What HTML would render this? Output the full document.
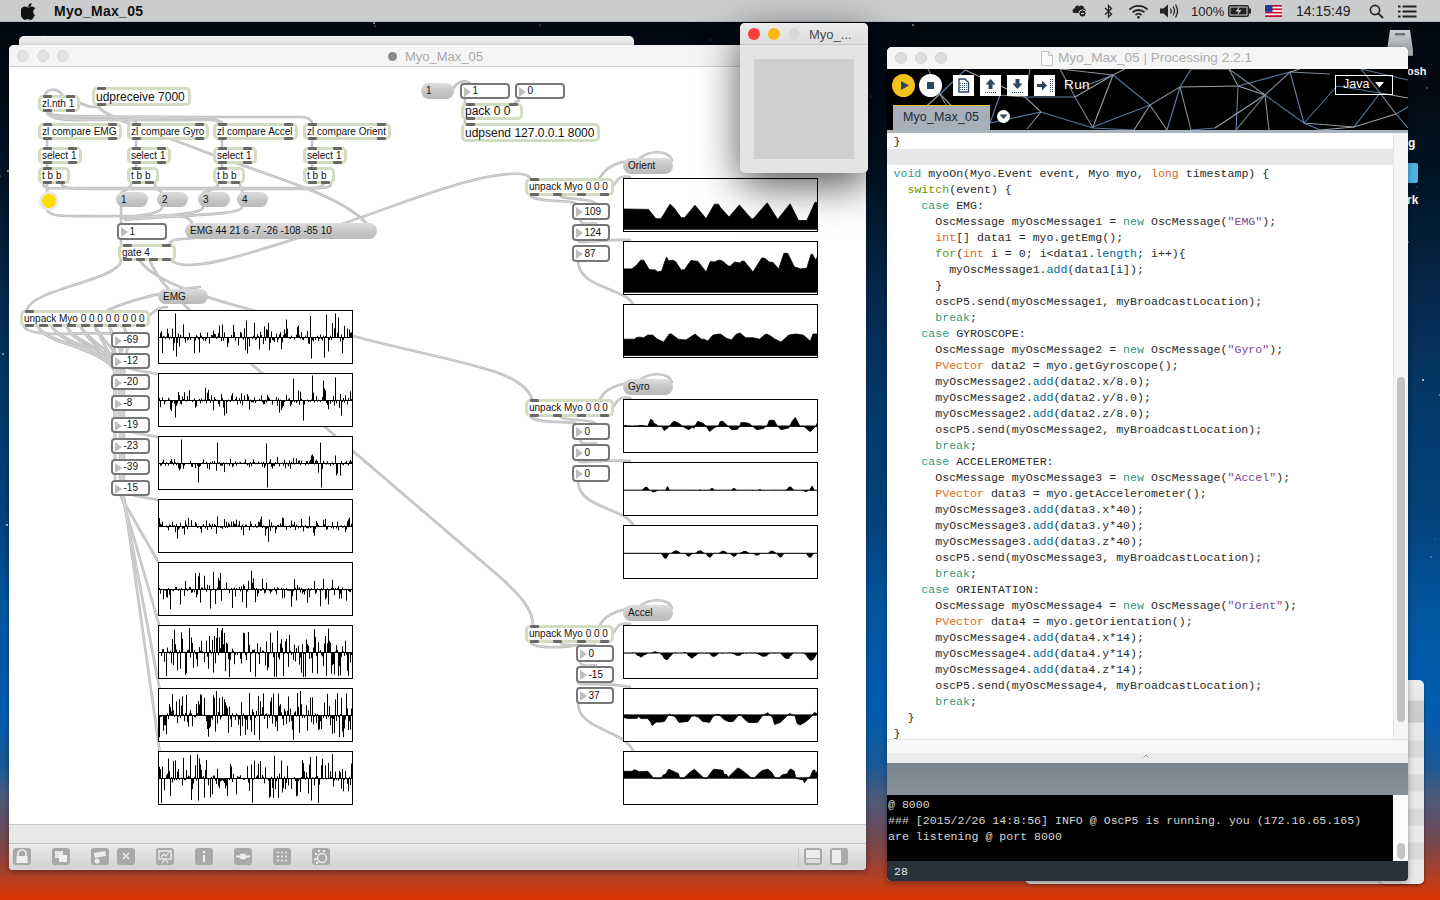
<!DOCTYPE html>
<html><head><meta charset="utf-8"><title>Myo_Max_05</title>
<style>
*{margin:0;padding:0;box-sizing:border-box}
html,body{width:1440px;height:900px;overflow:hidden;font-family:"Liberation Sans",sans-serif}
body{position:relative;background:linear-gradient(to bottom,#02070e 0px,#020a14 90px,#001628 190px,#062a52 310px,#033a6a 410px,#04407a 510px,#02569e 610px,#005cb0 710px,#1a5a98 765px,#505a78 800px,#605068 820px,#74484e 840px,#a04030 868px,#b84020 880px,#dc3400 900px)}
.a{position:absolute}
.menubar{position:absolute;left:0;top:0;width:1440px;height:22px;background:#cbcccd;border-bottom:1px solid #b5b6b8}
.win{position:absolute;border-radius:5px 5px 4px 4px;overflow:hidden}
.ob{position:absolute;background:#fff;border:3px solid #d2dcc2;border-radius:5px;font:10px 'Liberation Sans',sans-serif;color:#111;white-space:nowrap;line-height:11px;padding-left:1px}
.io{position:absolute;width:9px;height:3px;background:#686868;border-radius:1px}
.ms{position:absolute;border-radius:8px;background:linear-gradient(#dcdcdc,#c4c4c4 60%,#b9b9b9);font:10px 'Liberation Sans',sans-serif;color:#111;white-space:nowrap;padding-left:5px}
.nb{position:absolute;background:#fff;border:2px solid #777;border-radius:4px;font:10px 'Liberation Sans',sans-serif;color:#111;white-space:nowrap}
.nb i{position:absolute;left:2px;top:2px;width:0;height:0;border-left:7px solid #bdbdbd;border-top:5.5px solid transparent;border-bottom:5.5px solid transparent}
.gr{position:absolute;background:#fff;border:1px solid #000}
.code{position:absolute;font:11.6px 'Liberation Mono',monospace;color:#2a2a2a;white-space:pre;line-height:16px}
.k1{color:#33997e}.k3{color:#669900}.dt{color:#e2661a}.fn{color:#006699}.st{color:#7d4793}
</style></head><body>

<svg class="a" style="left:0;top:0" width="1440" height="900"><circle cx="663" cy="176" r="0.5" fill="#fff" fill-opacity="0.85"/><circle cx="148" cy="570" r="0.9" fill="#fff" fill-opacity="0.3"/><circle cx="1193" cy="81" r="0.5" fill="#fff" fill-opacity="0.45"/><circle cx="176" cy="466" r="0.5" fill="#fff" fill-opacity="0.85"/><circle cx="492" cy="114" r="0.5" fill="#fff" fill-opacity="0.85"/><circle cx="1158" cy="148" r="0.5" fill="#fff" fill-opacity="0.45"/><circle cx="1181" cy="428" r="0.7" fill="#fff" fill-opacity="0.3"/><circle cx="95" cy="592" r="0.9" fill="#fff" fill-opacity="0.45"/><circle cx="858" cy="169" r="0.9" fill="#fff" fill-opacity="0.3"/><circle cx="1147" cy="207" r="0.7" fill="#fff" fill-opacity="0.3"/><circle cx="762" cy="121" r="0.5" fill="#fff" fill-opacity="0.3"/><circle cx="1267" cy="232" r="1.1" fill="#fff" fill-opacity="0.85"/><circle cx="643" cy="498" r="0.9" fill="#fff" fill-opacity="0.85"/><circle cx="613" cy="276" r="0.7" fill="#fff" fill-opacity="0.45"/><circle cx="167" cy="329" r="0.9" fill="#fff" fill-opacity="0.85"/><circle cx="919" cy="316" r="0.5" fill="#fff" fill-opacity="0.3"/><circle cx="1048" cy="450" r="0.9" fill="#fff" fill-opacity="0.45"/><circle cx="311" cy="522" r="0.5" fill="#fff" fill-opacity="0.85"/><circle cx="1368" cy="101" r="0.9" fill="#fff" fill-opacity="0.6"/><circle cx="1423" cy="380" r="1.1" fill="#fff" fill-opacity="0.85"/><circle cx="140" cy="117" r="1.1" fill="#fff" fill-opacity="0.6"/><circle cx="1427" cy="88" r="0.9" fill="#fff" fill-opacity="0.3"/><circle cx="1325" cy="478" r="1.1" fill="#fff" fill-opacity="0.6"/><circle cx="1369" cy="377" r="1.1" fill="#fff" fill-opacity="0.3"/><circle cx="727" cy="194" r="1.1" fill="#fff" fill-opacity="0.3"/><circle cx="120" cy="245" r="0.7" fill="#fff" fill-opacity="0.6"/><circle cx="507" cy="429" r="1.1" fill="#fff" fill-opacity="0.85"/><circle cx="165" cy="192" r="1.1" fill="#fff" fill-opacity="0.85"/><circle cx="1125" cy="306" r="1.1" fill="#fff" fill-opacity="0.45"/><circle cx="1126" cy="307" r="0.9" fill="#fff" fill-opacity="0.85"/><circle cx="1398" cy="411" r="0.7" fill="#fff" fill-opacity="0.45"/><circle cx="169" cy="202" r="0.7" fill="#fff" fill-opacity="0.45"/><circle cx="1348" cy="260" r="1.1" fill="#fff" fill-opacity="0.3"/><circle cx="1206" cy="208" r="0.9" fill="#fff" fill-opacity="0.6"/><circle cx="8" cy="171" r="0.9" fill="#fff" fill-opacity="0.85"/><circle cx="1248" cy="348" r="0.5" fill="#fff" fill-opacity="0.45"/><circle cx="935" cy="594" r="1.1" fill="#fff" fill-opacity="0.85"/><circle cx="817" cy="425" r="1.1" fill="#fff" fill-opacity="0.3"/><circle cx="1299" cy="432" r="0.7" fill="#fff" fill-opacity="0.3"/><circle cx="137" cy="235" r="0.7" fill="#fff" fill-opacity="0.85"/><circle cx="225" cy="370" r="0.5" fill="#fff" fill-opacity="0.3"/><circle cx="0" cy="176" r="0.9" fill="#fff" fill-opacity="0.3"/><circle cx="1256" cy="48" r="0.7" fill="#fff" fill-opacity="0.3"/><circle cx="1257" cy="407" r="0.9" fill="#fff" fill-opacity="0.45"/><circle cx="711" cy="394" r="0.5" fill="#fff" fill-opacity="0.85"/><circle cx="236" cy="521" r="1.1" fill="#fff" fill-opacity="0.85"/><circle cx="990" cy="341" r="0.7" fill="#fff" fill-opacity="0.3"/><circle cx="209" cy="372" r="1.1" fill="#fff" fill-opacity="0.6"/><circle cx="1417" cy="187" r="0.7" fill="#fff" fill-opacity="0.3"/><circle cx="1081" cy="392" r="0.5" fill="#fff" fill-opacity="0.45"/><circle cx="1081" cy="327" r="0.9" fill="#fff" fill-opacity="0.3"/><circle cx="1061" cy="397" r="0.9" fill="#fff" fill-opacity="0.45"/><circle cx="456" cy="567" r="0.7" fill="#fff" fill-opacity="0.6"/><circle cx="1255" cy="221" r="1.1" fill="#fff" fill-opacity="0.45"/><circle cx="464" cy="226" r="0.9" fill="#fff" fill-opacity="0.85"/><circle cx="59" cy="50" r="1.1" fill="#fff" fill-opacity="0.6"/><circle cx="530" cy="220" r="1.1" fill="#fff" fill-opacity="0.6"/><circle cx="715" cy="395" r="0.7" fill="#fff" fill-opacity="0.3"/><circle cx="209" cy="254" r="0.7" fill="#fff" fill-opacity="0.85"/><circle cx="691" cy="231" r="0.5" fill="#fff" fill-opacity="0.85"/><circle cx="981" cy="374" r="0.5" fill="#fff" fill-opacity="0.3"/><circle cx="795" cy="226" r="0.7" fill="#fff" fill-opacity="0.85"/><circle cx="888" cy="362" r="1.1" fill="#fff" fill-opacity="0.3"/><circle cx="948" cy="433" r="0.7" fill="#fff" fill-opacity="0.3"/><circle cx="348" cy="152" r="0.7" fill="#fff" fill-opacity="0.3"/><circle cx="1209" cy="498" r="1.1" fill="#fff" fill-opacity="0.45"/><circle cx="1346" cy="380" r="0.7" fill="#fff" fill-opacity="0.45"/><circle cx="43" cy="36" r="0.7" fill="#fff" fill-opacity="0.3"/><circle cx="888" cy="221" r="0.5" fill="#fff" fill-opacity="0.45"/><circle cx="515" cy="239" r="0.7" fill="#fff" fill-opacity="0.6"/><circle cx="1201" cy="355" r="1.1" fill="#fff" fill-opacity="0.6"/><circle cx="268" cy="84" r="1.1" fill="#fff" fill-opacity="0.6"/><circle cx="1356" cy="551" r="0.7" fill="#fff" fill-opacity="0.85"/><circle cx="1089" cy="177" r="1.1" fill="#fff" fill-opacity="0.3"/><circle cx="375" cy="26" r="0.7" fill="#fff" fill-opacity="0.45"/><circle cx="289" cy="506" r="0.5" fill="#fff" fill-opacity="0.3"/><circle cx="667" cy="552" r="0.5" fill="#fff" fill-opacity="0.85"/><circle cx="1147" cy="80" r="0.7" fill="#fff" fill-opacity="0.45"/><circle cx="567" cy="65" r="1.1" fill="#fff" fill-opacity="0.3"/><circle cx="1150" cy="50" r="1.1" fill="#fff" fill-opacity="0.3"/><circle cx="666" cy="539" r="0.9" fill="#fff" fill-opacity="0.45"/><circle cx="926" cy="542" r="0.7" fill="#fff" fill-opacity="0.85"/><circle cx="1431" cy="557" r="0.7" fill="#fff" fill-opacity="0.6"/><circle cx="916" cy="162" r="0.5" fill="#fff" fill-opacity="0.85"/><circle cx="803" cy="474" r="0.5" fill="#fff" fill-opacity="0.6"/><circle cx="1374" cy="268" r="0.5" fill="#fff" fill-opacity="0.85"/><circle cx="435" cy="332" r="0.7" fill="#fff" fill-opacity="0.3"/><circle cx="1317" cy="396" r="0.9" fill="#fff" fill-opacity="0.45"/><circle cx="281" cy="500" r="0.5" fill="#fff" fill-opacity="0.45"/><circle cx="815" cy="520" r="0.7" fill="#fff" fill-opacity="0.45"/><circle cx="330" cy="463" r="0.9" fill="#fff" fill-opacity="0.85"/><circle cx="862" cy="222" r="0.9" fill="#fff" fill-opacity="0.6"/><circle cx="188" cy="396" r="0.9" fill="#fff" fill-opacity="0.3"/><circle cx="1134" cy="491" r="0.5" fill="#fff" fill-opacity="0.85"/><circle cx="787" cy="361" r="0.5" fill="#fff" fill-opacity="0.6"/><circle cx="231" cy="256" r="0.5" fill="#fff" fill-opacity="0.3"/><circle cx="543" cy="300" r="0.7" fill="#fff" fill-opacity="0.3"/><circle cx="553" cy="154" r="0.9" fill="#fff" fill-opacity="0.85"/><circle cx="831" cy="174" r="0.9" fill="#fff" fill-opacity="0.85"/><circle cx="183" cy="307" r="0.7" fill="#fff" fill-opacity="0.3"/><circle cx="871" cy="96" r="0.5" fill="#fff" fill-opacity="0.6"/><circle cx="1299" cy="112" r="0.5" fill="#fff" fill-opacity="0.6"/><circle cx="1245" cy="249" r="0.9" fill="#fff" fill-opacity="0.3"/><circle cx="249" cy="486" r="0.9" fill="#fff" fill-opacity="0.3"/><circle cx="1132" cy="449" r="0.7" fill="#fff" fill-opacity="0.6"/><circle cx="88" cy="561" r="0.5" fill="#fff" fill-opacity="0.45"/><circle cx="330" cy="290" r="0.7" fill="#fff" fill-opacity="0.3"/><circle cx="413" cy="341" r="0.7" fill="#fff" fill-opacity="0.6"/><circle cx="593" cy="478" r="0.9" fill="#fff" fill-opacity="0.45"/><circle cx="710" cy="40" r="0.5" fill="#fff" fill-opacity="0.6"/><circle cx="31" cy="40" r="1.1" fill="#fff" fill-opacity="0.45"/><circle cx="503" cy="479" r="1.1" fill="#fff" fill-opacity="0.3"/><circle cx="1344" cy="528" r="0.9" fill="#fff" fill-opacity="0.85"/><circle cx="1408" cy="242" r="0.9" fill="#fff" fill-opacity="0.45"/><circle cx="406" cy="165" r="0.9" fill="#fff" fill-opacity="0.85"/><circle cx="111" cy="154" r="0.5" fill="#fff" fill-opacity="0.3"/><circle cx="1280" cy="283" r="0.7" fill="#fff" fill-opacity="0.85"/><circle cx="113" cy="108" r="0.9" fill="#fff" fill-opacity="0.85"/><circle cx="1226" cy="270" r="0.5" fill="#fff" fill-opacity="0.6"/><circle cx="940" cy="211" r="0.9" fill="#fff" fill-opacity="0.45"/><circle cx="913" cy="25" r="0.9" fill="#fff" fill-opacity="0.6"/><circle cx="673" cy="582" r="0.7" fill="#fff" fill-opacity="0.6"/><circle cx="70" cy="338" r="0.9" fill="#fff" fill-opacity="0.45"/><circle cx="374" cy="23" r="1.1" fill="#fff" fill-opacity="0.6"/><circle cx="171" cy="508" r="0.7" fill="#fff" fill-opacity="0.6"/><circle cx="508" cy="538" r="0.5" fill="#fff" fill-opacity="0.3"/><circle cx="541" cy="113" r="1.1" fill="#fff" fill-opacity="0.45"/><circle cx="1201" cy="64" r="0.5" fill="#fff" fill-opacity="0.85"/><circle cx="613" cy="333" r="0.5" fill="#fff" fill-opacity="0.45"/><circle cx="1199" cy="563" r="1.1" fill="#fff" fill-opacity="0.45"/><circle cx="667" cy="528" r="0.9" fill="#fff" fill-opacity="0.45"/><circle cx="1267" cy="170" r="1.1" fill="#fff" fill-opacity="0.3"/><circle cx="1435" cy="539" r="0.5" fill="#fff" fill-opacity="0.45"/><circle cx="1405" cy="257" r="0.5" fill="#fff" fill-opacity="0.3"/><circle cx="85" cy="158" r="0.5" fill="#fff" fill-opacity="0.6"/><circle cx="771" cy="484" r="0.5" fill="#fff" fill-opacity="0.3"/><circle cx="1282" cy="566" r="1.1" fill="#fff" fill-opacity="0.45"/><circle cx="540" cy="25" r="0.5" fill="#fff" fill-opacity="0.85"/><circle cx="1030" cy="570" r="0.5" fill="#fff" fill-opacity="0.3"/><circle cx="970" cy="280" r="0.9" fill="#fff" fill-opacity="0.3"/><circle cx="480" cy="232" r="1.1" fill="#fff" fill-opacity="0.45"/><circle cx="1011" cy="413" r="1.1" fill="#fff" fill-opacity="0.3"/><circle cx="1400" cy="316" r="0.7" fill="#fff" fill-opacity="0.3"/><circle cx="158" cy="172" r="0.9" fill="#fff" fill-opacity="0.6"/><circle cx="1334" cy="333" r="0.5" fill="#fff" fill-opacity="0.45"/><circle cx="987" cy="84" r="0.9" fill="#fff" fill-opacity="0.85"/><circle cx="1376" cy="123" r="1.1" fill="#fff" fill-opacity="0.45"/><circle cx="595" cy="550" r="1.1" fill="#fff" fill-opacity="0.6"/><circle cx="954" cy="499" r="0.7" fill="#fff" fill-opacity="0.3"/><circle cx="638" cy="109" r="0.5" fill="#fff" fill-opacity="0.85"/><circle cx="593" cy="491" r="1.1" fill="#fff" fill-opacity="0.3"/><circle cx="550" cy="418" r="0.7" fill="#fff" fill-opacity="0.45"/><circle cx="152" cy="114" r="0.9" fill="#fff" fill-opacity="0.45"/><circle cx="736" cy="157" r="0.5" fill="#fff" fill-opacity="0.6"/><circle cx="1440" cy="395" r="1.1" fill="#fff" fill-opacity="0.45"/><circle cx="995" cy="425" r="0.7" fill="#fff" fill-opacity="0.3"/><circle cx="7" cy="525" r="1.1" fill="#fff" fill-opacity="0.85"/><circle cx="618" cy="166" r="0.9" fill="#fff" fill-opacity="0.85"/><circle cx="770" cy="345" r="0.9" fill="#fff" fill-opacity="0.3"/><circle cx="3" cy="354" r="1.1" fill="#fff" fill-opacity="0.6"/></svg>
<div class="menubar">
<svg class="a" style="left:21px;top:3px" width="15" height="17" viewBox="0 0 15 17"><path d="M10.6 0.3c0.1 1-0.3 2-0.9 2.7-0.6 0.7-1.6 1.2-2.5 1.1-0.1-1 0.4-2 0.9-2.6 0.6-0.7 1.7-1.2 2.5-1.2zM13.7 12.3c-0.4 0.9-0.6 1.3-1.1 2.1-0.7 1.1-1.8 2.5-3 2.5-1.1 0-1.4-0.7-2.9-0.7-1.5 0-1.8 0.7-2.9 0.7-1.2 0-2.2-1.2-2.9-2.3C-1 11.6-1.2 7.9 0.1 5.9c0.9-1.4 2.4-2.3 3.8-2.3 1.4 0 2.3 0.8 3.5 0.8 1.1 0 1.8-0.8 3.4-0.8 1.2 0 2.6 0.7 3.5 1.9-3.1 1.7-2.6 6.1 0.4 6.8z" fill="#111"/></svg>
<div class="a" style="left:54px;top:3px;font:bold 14px 'Liberation Sans',sans-serif;color:#111;letter-spacing:.3px">Myo_Max_05</div>
<div class="a" style="left:1191px;top:4px;font:13px 'Liberation Sans',sans-serif;color:#222">100%</div>
<div class="a" style="left:1296px;top:3px;font:14px 'Liberation Sans',sans-serif;color:#222">14:15:49</div>
<svg class="a" style="left:1071px;top:4px" width="17" height="14"><path d="M4 4C4 1.5 7 0.5 8.5 2.5C10 0.5 13.5 1.5 13 4.5C15.5 5 15.5 8.5 13 9H3.5C1 9 0.5 5 4 4Z" fill="#222"/><circle cx="11.5" cy="9.5" r="3.6" fill="#222" stroke="#d0d0d0" stroke-width="1"/><path d="M10 9.5H13" stroke="#d0d0d0" stroke-width="1.2"/></svg>
<svg class="a" style="left:1103px;top:3px" width="11" height="17"><path d="M2 5L8.5 11L5.5 14V2.5L8.5 5.5L2 11.5" fill="none" stroke="#222" stroke-width="1.3"/></svg>
<svg class="a" style="left:1128px;top:4px" width="21" height="15"><path d="M1.5 5.5A13 13 0 0 1 19.5 5.5" fill="none" stroke="#222" stroke-width="1.8"/><path d="M4.5 8.3A9 9 0 0 1 16.5 8.3" fill="none" stroke="#222" stroke-width="1.8"/><path d="M7.5 11A4.5 4.5 0 0 1 13.5 11" fill="none" stroke="#222" stroke-width="1.8"/><circle cx="10.5" cy="13.3" r="1.3" fill="#222"/></svg>
<svg class="a" style="left:1159px;top:3px" width="21" height="16"><path d="M1 5.5H4.5L9 1.5V14.5L4.5 10.5H1Z" fill="#222"/><path d="M11.5 5.5Q13 8 11.5 10.5M14 3.5Q17 8 14 12.5M16.5 1.5Q20.5 8 16.5 14.5" fill="none" stroke="#222" stroke-width="1.3"/></svg>
<svg class="a" style="left:1228px;top:5px" width="24" height="12"><rect x="0.8" y="0.8" width="19.5" height="10.4" rx="1.5" fill="none" stroke="#222" stroke-width="1.5"/><rect x="21" y="3.5" width="2" height="5" fill="#222"/><rect x="2.5" y="2.5" width="16" height="7" fill="#222"/><path d="M11.5 1.5L7.5 6.5H10.5L9 10.5L13.5 5H10.5Z" fill="#d0d0d0"/></svg>
<svg class="a" style="left:1265px;top:5px" width="17" height="12"><rect x="0" y="0" width="17" height="12" fill="#c8102e"/><rect x="0" y="1.7" width="17" height="1.7" fill="#fff"/><rect x="0" y="5.1" width="17" height="1.7" fill="#fff"/><rect x="0" y="8.5" width="17" height="1.7" fill="#fff"/><rect x="0" y="0" width="7.5" height="6.8" fill="#2a3a8c"/></svg>
<svg class="a" style="left:1369px;top:4px" width="15" height="15"><circle cx="6" cy="6" r="4.6" fill="none" stroke="#222" stroke-width="1.6"/><path d="M9.3 9.3L14 14" stroke="#222" stroke-width="1.8"/></svg>
<svg class="a" style="left:1398px;top:5px" width="19" height="13"><g fill="#222"><rect x="0" y="0.5" width="2.5" height="2"/><rect x="0" y="5.5" width="2.5" height="2"/><rect x="0" y="10.5" width="2.5" height="2"/><rect x="4.5" y="0.5" width="14" height="2"/><rect x="4.5" y="5.5" width="14" height="2"/><rect x="4.5" y="10.5" width="14" height="2"/></g></svg>
</div>
<svg class="a" style="left:1386px;top:28px" width="28" height="30"><defs><linearGradient id="hd" x1="0" y1="0" x2="0" y2="1"><stop offset="0" stop-color="#cfd3d6"/><stop offset="1" stop-color="#8f959a"/></linearGradient></defs><path d="M4 2H24L27 22V28H1V22Z" fill="url(#hd)"/><rect x="9" y="5" width="10" height="2.5" fill="#6d7277"/><rect x="2" y="22" width="24" height="5" fill="#aeb3b7"/></svg>
<div class="a" style="left:1407px;top:65px;font:bold 11px 'Liberation Sans',sans-serif;color:#f4f4f4">osh</div>
<div class="a" style="left:1408px;top:136px;font:bold 12px 'Liberation Sans',sans-serif;color:#fff">g</div>
<div class="a" style="left:1407px;top:163px;width:11px;height:20px;background:#4fb4e4;border-radius:2px"></div>
<div class="a" style="left:1407px;top:193px;font:bold 12px 'Liberation Sans',sans-serif;color:#fff">rk</div>
<div class="a" style="left:19px;top:36px;width:615px;height:20px;background:#ebebeb;border-radius:5px 5px 0 0;border-top:1px solid #f6f6f6"></div>
<div class="win" style="left:9px;top:45px;width:857px;height:825px;background:#fff;box-shadow:0 2px 6px rgba(0,0,0,.35)">
<div class="a" style="left:0;top:0;width:857px;height:22px;background:#f5f5f5;border-bottom:1px solid #cfcfcf"></div>
<div class="a" style="left:8px;top:5px;width:12px;height:12px;border-radius:50%;background:#e2e2e2;border:1px solid #d6d6d6"></div>
<div class="a" style="left:28px;top:5px;width:12px;height:12px;border-radius:50%;background:#e2e2e2;border:1px solid #d6d6d6"></div>
<div class="a" style="left:48px;top:5px;width:12px;height:12px;border-radius:50%;background:#e2e2e2;border:1px solid #d6d6d6"></div>
<div class="a" style="left:379px;top:7px;width:9px;height:9px;border-radius:50%;background:#8a8a8a"></div>
<div class="a" style="left:396px;top:4px;font:13px 'Liberation Sans',sans-serif;color:#a9a9a9">Myo_Max_05</div>
<div class="a" style="left:0;top:779px;width:857px;height:19px;background:#e8e8e8;border-top:1px solid #c8c8c8"></div>
<div class="a" style="left:0;top:798px;width:857px;height:27px;background:linear-gradient(#ebebeb,#d3d3d3 88%,#dadadd);border-top:1px solid #c6c6c6"></div>
<div class="a" style="left:4px;top:803px;width:18px;height:17px;border-radius:3px;background:#a9a9a9"></div><div class="a" style="left:43px;top:803px;width:18px;height:17px;border-radius:3px;background:#a9a9a9"></div><div class="a" style="left:82px;top:803px;width:18px;height:17px;border-radius:3px;background:#a9a9a9"></div><div class="a" style="left:108px;top:803px;width:18px;height:17px;border-radius:3px;background:#a9a9a9"></div><div class="a" style="left:147px;top:803px;width:18px;height:17px;border-radius:3px;background:#a9a9a9"></div><div class="a" style="left:186px;top:803px;width:18px;height:17px;border-radius:3px;background:#a9a9a9"></div><div class="a" style="left:225px;top:803px;width:18px;height:17px;border-radius:3px;background:#a9a9a9"></div><div class="a" style="left:264px;top:803px;width:18px;height:17px;border-radius:3px;background:#a9a9a9"></div><div class="a" style="left:303px;top:803px;width:18px;height:17px;border-radius:3px;background:#a9a9a9"></div><svg class="a" style="left:4px;top:803px" width="18" height="17"><path d="M5 8V6A4 4 0 0 1 13 6V8" fill="none" stroke="#eee" stroke-width="1.6"/><rect x="3.5" y="8" width="11" height="7" fill="#eee"/></svg><svg class="a" style="left:43px;top:803px" width="18" height="17"><rect x="3" y="3" width="8" height="7" fill="#e6e6e6"/><rect x="7" y="7" width="8" height="7" fill="#f2f2f2"/></svg><svg class="a" style="left:82px;top:803px" width="18" height="17"><path d="M3 5L14 3L15 8L4 10Z" fill="#eee"/><circle cx="6" cy="13" r="2.5" fill="#eee"/></svg><svg class="a" style="left:108px;top:803px" width="18" height="17"><path d="M6 5L12 11M12 5L6 11" stroke="#eee" stroke-width="1.4"/></svg><svg class="a" style="left:147px;top:803px" width="18" height="17"><rect x="3" y="3" width="12" height="8" fill="none" stroke="#eee" stroke-width="1.4"/><path d="M5 9L8 6L10 8L13 4M9 11L6 15M9 11L12 15" stroke="#eee" stroke-width="1.2" fill="none"/></svg><svg class="a" style="left:186px;top:803px" width="18" height="17"><circle cx="9" cy="4" r="1.3" fill="#eee"/><rect x="8" y="7" width="2" height="7" fill="#eee"/></svg><svg class="a" style="left:225px;top:803px" width="18" height="17"><path d="M2 8.5H16" stroke="#eee" stroke-width="2"/><ellipse cx="9" cy="8.5" rx="3.5" ry="3" fill="#eee"/></svg><svg class="a" style="left:264px;top:803px" width="18" height="17"><circle cx="5" cy="4.5" r="1" fill="#eee"/><circle cx="5" cy="8.5" r="1" fill="#eee"/><circle cx="5" cy="12.5" r="1" fill="#eee"/><circle cx="9" cy="4.5" r="1" fill="#eee"/><circle cx="9" cy="8.5" r="1" fill="#eee"/><circle cx="9" cy="12.5" r="1" fill="#eee"/><circle cx="13" cy="4.5" r="1" fill="#eee"/><circle cx="13" cy="8.5" r="1" fill="#eee"/><circle cx="13" cy="12.5" r="1" fill="#eee"/></svg><svg class="a" style="left:303px;top:803px" width="18" height="17"><circle cx="10" cy="10" r="4.5" fill="none" stroke="#eee" stroke-width="1.5"/><circle cx="4" cy="6" r="1.2" fill="#eee"/><circle cx="7" cy="3" r="1.2" fill="#eee"/><circle cx="12" cy="3" r="1.2" fill="#eee"/><circle cx="3.5" cy="11" r="1.2" fill="#eee"/><circle cx="5" cy="15" r="1.2" fill="#eee"/></svg><div class="a" style="left:789px;top:803px;width:1px;height:20px;background:#c9c9c9"></div><div class="a" style="left:795px;top:803px;width:18px;height:17px;border:2px solid #aaa;border-radius:3px;background:linear-gradient(#ececec 0,#ececec 62%,#aaa 62%,#aaa 72%,#dcdcdc 72%)"></div><div class="a" style="left:821px;top:803px;width:18px;height:17px;border:2px solid #aaa;border-radius:3px;background:linear-gradient(to right,#ececec 0,#ececec 62%,#aaa 62%,#aaa 100%)"></div>
</div>
<svg class="a" style="left:0;top:0" width="870" height="830"><path d="M47 112 C47 118 60 117 90 117 L300 117 C308 117 311 119 312 123" fill="none" stroke="#bcbcbc" stroke-width="2.6" stroke-linecap="round"/><path d="M47 112 C49 121 70 120 100 120 L210 120 C218 120 222 121 222 123" fill="none" stroke="#bcbcbc" stroke-width="2.6" stroke-linecap="round"/><path d="M50 112 C55 121 90 120 120 119 C130 119 136 121 136 123" fill="none" stroke="#bcbcbc" stroke-width="2.6" stroke-linecap="round"/><path d="M56 115 C80 118 190 116 210 118 C216 119 218 121 218 123" fill="none" stroke="#bcbcbc" stroke-width="2.6" stroke-linecap="round"/><path d="M80 103 C90 108 95 108 100 106" fill="none" stroke="#bcbcbc" stroke-width="2.6" stroke-linecap="round"/><path d="M97 106 C110 120 150 130 200 150 C280 180 340 195 366 223" fill="none" stroke="#bcbcbc" stroke-width="2.6" stroke-linecap="round"/><path d="M45 95 C47 88 58 88 62 95" fill="none" stroke="#bcbcbc" stroke-width="2.6" stroke-linecap="round"/><path d="M47 140 L47 147" fill="none" stroke="#bcbcbc" stroke-width="2.6" stroke-linecap="round"/><path d="M136 140 L136 147" fill="none" stroke="#bcbcbc" stroke-width="2.6" stroke-linecap="round"/><path d="M222 140 L222 147" fill="none" stroke="#bcbcbc" stroke-width="2.6" stroke-linecap="round"/><path d="M312 140 L312 147" fill="none" stroke="#bcbcbc" stroke-width="2.6" stroke-linecap="round"/><path d="M47 164 L47 167" fill="none" stroke="#bcbcbc" stroke-width="2.6" stroke-linecap="round"/><path d="M136 164 L136 167" fill="none" stroke="#bcbcbc" stroke-width="2.6" stroke-linecap="round"/><path d="M222 164 L222 167" fill="none" stroke="#bcbcbc" stroke-width="2.6" stroke-linecap="round"/><path d="M312 164 L312 167" fill="none" stroke="#bcbcbc" stroke-width="2.6" stroke-linecap="round"/><path d="M47 184 C47 190 47 192 48 194" fill="none" stroke="#bcbcbc" stroke-width="2.6" stroke-linecap="round"/><path d="M43 184 C44 190 50 188 80 188 L320 188 C330 188 331 186 331 184" fill="none" stroke="#bcbcbc" stroke-width="2.6" stroke-linecap="round"/><path d="M62 184 C62 188 70 189 100 189 L300 189 C318 189 322 187 324 184" fill="none" stroke="#bcbcbc" stroke-width="2.6" stroke-linecap="round"/><path d="M131 184 C131 189 125 190 121 193" fill="none" stroke="#bcbcbc" stroke-width="2.6" stroke-linecap="round"/><path d="M155 184 C155 189 160 190 162 193" fill="none" stroke="#bcbcbc" stroke-width="2.6" stroke-linecap="round"/><path d="M218 184 C218 189 210 190 203 193" fill="none" stroke="#bcbcbc" stroke-width="2.6" stroke-linecap="round"/><path d="M240 184 C240 189 244 190 242 193" fill="none" stroke="#bcbcbc" stroke-width="2.6" stroke-linecap="round"/><path d="M47 209 C47 218 70 216 120 216 L170 216 C185 216 190 218 192 223" fill="none" stroke="#bcbcbc" stroke-width="2.6" stroke-linecap="round"/><path d="M121 207 L121 223" fill="none" stroke="#bcbcbc" stroke-width="2.6" stroke-linecap="round"/><path d="M162 207 C162 214 140 215 122 218" fill="none" stroke="#bcbcbc" stroke-width="2.6" stroke-linecap="round"/><path d="M203 207 C203 215 160 215 125 219" fill="none" stroke="#bcbcbc" stroke-width="2.6" stroke-linecap="round"/><path d="M242 207 C242 216 170 215 126 220" fill="none" stroke="#bcbcbc" stroke-width="2.6" stroke-linecap="round"/><path d="M121 240 L121 244" fill="none" stroke="#bcbcbc" stroke-width="2.6" stroke-linecap="round"/><path d="M170 244 C170 238 180 240 195 238" fill="none" stroke="#bcbcbc" stroke-width="2.6" stroke-linecap="round"/><path d="M121 261 C118 280 30 290 27 310" fill="none" stroke="#bcbcbc" stroke-width="2.6" stroke-linecap="round"/><path d="M140 261 C160 290 250 310 353 336 C450 362 522 368 532 399" fill="none" stroke="#bcbcbc" stroke-width="2.6" stroke-linecap="round"/><path d="M150 261 C160 285 180 300 200 320 L500 577 C520 595 533 610 533 625" fill="none" stroke="#bcbcbc" stroke-width="2.6" stroke-linecap="round"/><path d="M172 261 C190 275 260 250 330 228 C400 205 480 170 522 174 C528 175 530 177 530 179" fill="none" stroke="#bcbcbc" stroke-width="2.6" stroke-linecap="round"/><path d="M108 310 C130 300 170 290 200 287" fill="none" stroke="#bcbcbc" stroke-width="2.6" stroke-linecap="round"/><path d="M150 315 C155 310 160 307 167 307" fill="none" stroke="#bcbcbc" stroke-width="2.6" stroke-linecap="round"/><path d="M24.0 327 C34.0 340 100 330 113 334.0" fill="none" stroke="#bcbcbc" stroke-width="2.6" stroke-linecap="round"/><path d="M38.2 327 C46.2 345 114 355 115 353.1 L115 353.1" fill="none" stroke="#bcbcbc" stroke-width="2.6" stroke-linecap="round"/><path d="M52.5 327 C60.5 345 114 355 115 374.3 L115 374.3" fill="none" stroke="#bcbcbc" stroke-width="2.6" stroke-linecap="round"/><path d="M66.8 327 C74.8 345 114 355 115 375.0 L115 395.4" fill="none" stroke="#bcbcbc" stroke-width="2.6" stroke-linecap="round"/><path d="M81.0 327 C89.0 345 114 355 115 375.0 L115 416.6" fill="none" stroke="#bcbcbc" stroke-width="2.6" stroke-linecap="round"/><path d="M95.2 327 C103.2 345 114 355 115 375.0 L115 437.7" fill="none" stroke="#bcbcbc" stroke-width="2.6" stroke-linecap="round"/><path d="M109.5 327 C117.5 345 114 355 115 375.0 L115 458.8" fill="none" stroke="#bcbcbc" stroke-width="2.6" stroke-linecap="round"/><path d="M123.8 327 C131.8 345 114 355 115 375.0 L115 480.0" fill="none" stroke="#bcbcbc" stroke-width="2.6" stroke-linecap="round"/><path d="M38.2 327 C48.2 345 117 350 118 380 L118 361 C121 371 150 371 162 375" fill="none" stroke="#bcbcbc" stroke-width="2.6" stroke-linecap="round"/><path d="M52.5 327 C62.5 345 118 350 119 380 L119 424 C122 434 150 434 162 438" fill="none" stroke="#bcbcbc" stroke-width="2.6" stroke-linecap="round"/><path d="M66.8 327 C76.8 345 119 350 120 380 L120 487 C123 497 150 497 162 501" fill="none" stroke="#bcbcbc" stroke-width="2.6" stroke-linecap="round"/><path d="M81.0 327 C91.0 345 120 350 121 380 L121 497 L160 565" fill="none" stroke="#bcbcbc" stroke-width="2.6" stroke-linecap="round"/><path d="M95.2 327 C105.2 345 121 350 122 380 L122 497 L160 628" fill="none" stroke="#bcbcbc" stroke-width="2.6" stroke-linecap="round"/><path d="M109.5 327 C119.5 345 122 350 123 380 L123 497 L160 691" fill="none" stroke="#bcbcbc" stroke-width="2.6" stroke-linecap="round"/><path d="M123.8 327 C133.8 345 123 350 124 380 L124 497 L160 754" fill="none" stroke="#bcbcbc" stroke-width="2.6" stroke-linecap="round"/><path d="M452 90 C458 80 466 80 470 83" fill="none" stroke="#bcbcbc" stroke-width="2.6" stroke-linecap="round"/><path d="M465 99 L465 103" fill="none" stroke="#bcbcbc" stroke-width="2.6" stroke-linecap="round"/><path d="M519 99 C519 103 515 101 515 103" fill="none" stroke="#bcbcbc" stroke-width="2.6" stroke-linecap="round"/><path d="M465 120 L465 123" fill="none" stroke="#bcbcbc" stroke-width="2.6" stroke-linecap="round"/><path d="M600 178 C605 168 615 163 628 161" fill="none" stroke="#bcbcbc" stroke-width="2.6" stroke-linecap="round"/><path d="M640 158 C650 150 668 150 672 160" fill="none" stroke="#bcbcbc" stroke-width="2.6" stroke-linecap="round"/><path d="M612 188 C618 178 620 175 630 177" fill="none" stroke="#bcbcbc" stroke-width="2.6" stroke-linecap="round"/><path d="M530 195 C535 203 570 200 575 203" fill="none" stroke="#bcbcbc" stroke-width="2.6" stroke-linecap="round"/><path d="M560 195 C560 200 590 198 595 203" fill="none" stroke="#bcbcbc" stroke-width="2.6" stroke-linecap="round"/><path d="M580 219 C580 228 600 221 595 224" fill="none" stroke="#bcbcbc" stroke-width="2.6" stroke-linecap="round"/><path d="M578 240 C578 245 600 239 630 240" fill="none" stroke="#bcbcbc" stroke-width="2.6" stroke-linecap="round"/><path d="M578 261 C578 288 625 288 633 304" fill="none" stroke="#bcbcbc" stroke-width="2.6" stroke-linecap="round"/><path d="M600 399 C605 389 615 385 628 383" fill="none" stroke="#bcbcbc" stroke-width="2.6" stroke-linecap="round"/><path d="M640 380 C650 372 668 372 672 382" fill="none" stroke="#bcbcbc" stroke-width="2.6" stroke-linecap="round"/><path d="M612 409 C618 399 620 396 630 398" fill="none" stroke="#bcbcbc" stroke-width="2.6" stroke-linecap="round"/><path d="M530 416 C535 424 570 421 575 423" fill="none" stroke="#bcbcbc" stroke-width="2.6" stroke-linecap="round"/><path d="M560 416 C560 421 590 419 595 423" fill="none" stroke="#bcbcbc" stroke-width="2.6" stroke-linecap="round"/><path d="M580 439 C580 448 600 441 595 444" fill="none" stroke="#bcbcbc" stroke-width="2.6" stroke-linecap="round"/><path d="M578 460 C578 465 600 459 630 461" fill="none" stroke="#bcbcbc" stroke-width="2.6" stroke-linecap="round"/><path d="M578 481 C578 508 625 508 633 525" fill="none" stroke="#bcbcbc" stroke-width="2.6" stroke-linecap="round"/><path d="M600 625 C605 615 615 611 628 609" fill="none" stroke="#bcbcbc" stroke-width="2.6" stroke-linecap="round"/><path d="M640 606 C650 598 668 598 672 608" fill="none" stroke="#bcbcbc" stroke-width="2.6" stroke-linecap="round"/><path d="M612 635 C618 625 620 622 630 624" fill="none" stroke="#bcbcbc" stroke-width="2.6" stroke-linecap="round"/><path d="M530 642 C535 650 570 647 575 645" fill="none" stroke="#bcbcbc" stroke-width="2.6" stroke-linecap="round"/><path d="M560 642 C560 647 590 645 595 645" fill="none" stroke="#bcbcbc" stroke-width="2.6" stroke-linecap="round"/><path d="M580 661 C580 670 600 663 595 666" fill="none" stroke="#bcbcbc" stroke-width="2.6" stroke-linecap="round"/><path d="M578 682 C578 687 600 681 630 687" fill="none" stroke="#bcbcbc" stroke-width="2.6" stroke-linecap="round"/><path d="M578 703 C578 730 625 730 633 751" fill="none" stroke="#bcbcbc" stroke-width="2.6" stroke-linecap="round"/><path d="M47 112 C47 118 60 117 90 117 L300 117 C308 117 311 119 312 123" fill="none" stroke="#d9d9d9" stroke-width="0.8"/><path d="M47 112 C49 121 70 120 100 120 L210 120 C218 120 222 121 222 123" fill="none" stroke="#d9d9d9" stroke-width="0.8"/><path d="M50 112 C55 121 90 120 120 119 C130 119 136 121 136 123" fill="none" stroke="#d9d9d9" stroke-width="0.8"/><path d="M56 115 C80 118 190 116 210 118 C216 119 218 121 218 123" fill="none" stroke="#d9d9d9" stroke-width="0.8"/><path d="M80 103 C90 108 95 108 100 106" fill="none" stroke="#d9d9d9" stroke-width="0.8"/><path d="M97 106 C110 120 150 130 200 150 C280 180 340 195 366 223" fill="none" stroke="#d9d9d9" stroke-width="0.8"/><path d="M45 95 C47 88 58 88 62 95" fill="none" stroke="#d9d9d9" stroke-width="0.8"/><path d="M47 140 L47 147" fill="none" stroke="#d9d9d9" stroke-width="0.8"/><path d="M136 140 L136 147" fill="none" stroke="#d9d9d9" stroke-width="0.8"/><path d="M222 140 L222 147" fill="none" stroke="#d9d9d9" stroke-width="0.8"/><path d="M312 140 L312 147" fill="none" stroke="#d9d9d9" stroke-width="0.8"/><path d="M47 164 L47 167" fill="none" stroke="#d9d9d9" stroke-width="0.8"/><path d="M136 164 L136 167" fill="none" stroke="#d9d9d9" stroke-width="0.8"/><path d="M222 164 L222 167" fill="none" stroke="#d9d9d9" stroke-width="0.8"/><path d="M312 164 L312 167" fill="none" stroke="#d9d9d9" stroke-width="0.8"/><path d="M47 184 C47 190 47 192 48 194" fill="none" stroke="#d9d9d9" stroke-width="0.8"/><path d="M43 184 C44 190 50 188 80 188 L320 188 C330 188 331 186 331 184" fill="none" stroke="#d9d9d9" stroke-width="0.8"/><path d="M62 184 C62 188 70 189 100 189 L300 189 C318 189 322 187 324 184" fill="none" stroke="#d9d9d9" stroke-width="0.8"/><path d="M131 184 C131 189 125 190 121 193" fill="none" stroke="#d9d9d9" stroke-width="0.8"/><path d="M155 184 C155 189 160 190 162 193" fill="none" stroke="#d9d9d9" stroke-width="0.8"/><path d="M218 184 C218 189 210 190 203 193" fill="none" stroke="#d9d9d9" stroke-width="0.8"/><path d="M240 184 C240 189 244 190 242 193" fill="none" stroke="#d9d9d9" stroke-width="0.8"/><path d="M47 209 C47 218 70 216 120 216 L170 216 C185 216 190 218 192 223" fill="none" stroke="#d9d9d9" stroke-width="0.8"/><path d="M121 207 L121 223" fill="none" stroke="#d9d9d9" stroke-width="0.8"/><path d="M162 207 C162 214 140 215 122 218" fill="none" stroke="#d9d9d9" stroke-width="0.8"/><path d="M203 207 C203 215 160 215 125 219" fill="none" stroke="#d9d9d9" stroke-width="0.8"/><path d="M242 207 C242 216 170 215 126 220" fill="none" stroke="#d9d9d9" stroke-width="0.8"/><path d="M121 240 L121 244" fill="none" stroke="#d9d9d9" stroke-width="0.8"/><path d="M170 244 C170 238 180 240 195 238" fill="none" stroke="#d9d9d9" stroke-width="0.8"/><path d="M121 261 C118 280 30 290 27 310" fill="none" stroke="#d9d9d9" stroke-width="0.8"/><path d="M140 261 C160 290 250 310 353 336 C450 362 522 368 532 399" fill="none" stroke="#d9d9d9" stroke-width="0.8"/><path d="M150 261 C160 285 180 300 200 320 L500 577 C520 595 533 610 533 625" fill="none" stroke="#d9d9d9" stroke-width="0.8"/><path d="M172 261 C190 275 260 250 330 228 C400 205 480 170 522 174 C528 175 530 177 530 179" fill="none" stroke="#d9d9d9" stroke-width="0.8"/><path d="M108 310 C130 300 170 290 200 287" fill="none" stroke="#d9d9d9" stroke-width="0.8"/><path d="M150 315 C155 310 160 307 167 307" fill="none" stroke="#d9d9d9" stroke-width="0.8"/><path d="M24.0 327 C34.0 340 100 330 113 334.0" fill="none" stroke="#d9d9d9" stroke-width="0.8"/><path d="M38.2 327 C46.2 345 114 355 115 353.1 L115 353.1" fill="none" stroke="#d9d9d9" stroke-width="0.8"/><path d="M52.5 327 C60.5 345 114 355 115 374.3 L115 374.3" fill="none" stroke="#d9d9d9" stroke-width="0.8"/><path d="M66.8 327 C74.8 345 114 355 115 375.0 L115 395.4" fill="none" stroke="#d9d9d9" stroke-width="0.8"/><path d="M81.0 327 C89.0 345 114 355 115 375.0 L115 416.6" fill="none" stroke="#d9d9d9" stroke-width="0.8"/><path d="M95.2 327 C103.2 345 114 355 115 375.0 L115 437.7" fill="none" stroke="#d9d9d9" stroke-width="0.8"/><path d="M109.5 327 C117.5 345 114 355 115 375.0 L115 458.8" fill="none" stroke="#d9d9d9" stroke-width="0.8"/><path d="M123.8 327 C131.8 345 114 355 115 375.0 L115 480.0" fill="none" stroke="#d9d9d9" stroke-width="0.8"/><path d="M38.2 327 C48.2 345 117 350 118 380 L118 361 C121 371 150 371 162 375" fill="none" stroke="#d9d9d9" stroke-width="0.8"/><path d="M52.5 327 C62.5 345 118 350 119 380 L119 424 C122 434 150 434 162 438" fill="none" stroke="#d9d9d9" stroke-width="0.8"/><path d="M66.8 327 C76.8 345 119 350 120 380 L120 487 C123 497 150 497 162 501" fill="none" stroke="#d9d9d9" stroke-width="0.8"/><path d="M81.0 327 C91.0 345 120 350 121 380 L121 497 L160 565" fill="none" stroke="#d9d9d9" stroke-width="0.8"/><path d="M95.2 327 C105.2 345 121 350 122 380 L122 497 L160 628" fill="none" stroke="#d9d9d9" stroke-width="0.8"/><path d="M109.5 327 C119.5 345 122 350 123 380 L123 497 L160 691" fill="none" stroke="#d9d9d9" stroke-width="0.8"/><path d="M123.8 327 C133.8 345 123 350 124 380 L124 497 L160 754" fill="none" stroke="#d9d9d9" stroke-width="0.8"/><path d="M452 90 C458 80 466 80 470 83" fill="none" stroke="#d9d9d9" stroke-width="0.8"/><path d="M465 99 L465 103" fill="none" stroke="#d9d9d9" stroke-width="0.8"/><path d="M519 99 C519 103 515 101 515 103" fill="none" stroke="#d9d9d9" stroke-width="0.8"/><path d="M465 120 L465 123" fill="none" stroke="#d9d9d9" stroke-width="0.8"/><path d="M600 178 C605 168 615 163 628 161" fill="none" stroke="#d9d9d9" stroke-width="0.8"/><path d="M640 158 C650 150 668 150 672 160" fill="none" stroke="#d9d9d9" stroke-width="0.8"/><path d="M612 188 C618 178 620 175 630 177" fill="none" stroke="#d9d9d9" stroke-width="0.8"/><path d="M530 195 C535 203 570 200 575 203" fill="none" stroke="#d9d9d9" stroke-width="0.8"/><path d="M560 195 C560 200 590 198 595 203" fill="none" stroke="#d9d9d9" stroke-width="0.8"/><path d="M580 219 C580 228 600 221 595 224" fill="none" stroke="#d9d9d9" stroke-width="0.8"/><path d="M578 240 C578 245 600 239 630 240" fill="none" stroke="#d9d9d9" stroke-width="0.8"/><path d="M578 261 C578 288 625 288 633 304" fill="none" stroke="#d9d9d9" stroke-width="0.8"/><path d="M600 399 C605 389 615 385 628 383" fill="none" stroke="#d9d9d9" stroke-width="0.8"/><path d="M640 380 C650 372 668 372 672 382" fill="none" stroke="#d9d9d9" stroke-width="0.8"/><path d="M612 409 C618 399 620 396 630 398" fill="none" stroke="#d9d9d9" stroke-width="0.8"/><path d="M530 416 C535 424 570 421 575 423" fill="none" stroke="#d9d9d9" stroke-width="0.8"/><path d="M560 416 C560 421 590 419 595 423" fill="none" stroke="#d9d9d9" stroke-width="0.8"/><path d="M580 439 C580 448 600 441 595 444" fill="none" stroke="#d9d9d9" stroke-width="0.8"/><path d="M578 460 C578 465 600 459 630 461" fill="none" stroke="#d9d9d9" stroke-width="0.8"/><path d="M578 481 C578 508 625 508 633 525" fill="none" stroke="#d9d9d9" stroke-width="0.8"/><path d="M600 625 C605 615 615 611 628 609" fill="none" stroke="#d9d9d9" stroke-width="0.8"/><path d="M640 606 C650 598 668 598 672 608" fill="none" stroke="#d9d9d9" stroke-width="0.8"/><path d="M612 635 C618 625 620 622 630 624" fill="none" stroke="#d9d9d9" stroke-width="0.8"/><path d="M530 642 C535 650 570 647 575 645" fill="none" stroke="#d9d9d9" stroke-width="0.8"/><path d="M560 642 C560 647 590 645 595 645" fill="none" stroke="#d9d9d9" stroke-width="0.8"/><path d="M580 661 C580 670 600 663 595 666" fill="none" stroke="#d9d9d9" stroke-width="0.8"/><path d="M578 682 C578 687 600 681 630 687" fill="none" stroke="#d9d9d9" stroke-width="0.8"/><path d="M578 703 C578 730 625 730 633 751" fill="none" stroke="#d9d9d9" stroke-width="0.8"/></svg>
<div class="ob" style="left:38px;top:95px;width:42px;height:17px;font-size:10px;line-height:11px">zl.nth 1</div><div class="io" style="left:43.0px;top:95px"></div><div class="io" style="left:66.0px;top:95px"></div><div class="io" style="left:43.0px;top:109px"></div><div class="io" style="left:66.0px;top:109px"></div>
<div class="ob" style="left:92px;top:87px;width:99px;height:19px;font-size:12px;line-height:14px">udpreceive 7000</div><div class="io" style="left:97.0px;top:87px"></div><div class="io" style="left:97.0px;top:103px"></div>
<div class="ob" style="left:38px;top:123px;width:84px;height:17px;font-size:10px;line-height:11px">zl compare EMG</div><div class="io" style="left:43.0px;top:123px"></div><div class="io" style="left:108.0px;top:123px"></div><div class="io" style="left:43.0px;top:137px"></div><div class="io" style="left:108.0px;top:137px"></div>
<div class="ob" style="left:38px;top:147px;width:44px;height:17px;font-size:10px;line-height:11px">select 1</div><div class="io" style="left:43.0px;top:147px"></div><div class="io" style="left:68.0px;top:147px"></div><div class="io" style="left:43.0px;top:161px"></div><div class="io" style="left:68.0px;top:161px"></div>
<div class="ob" style="left:38px;top:167px;width:32px;height:17px;font-size:10px;line-height:11px">t b b</div><div class="io" style="left:43.0px;top:167px"></div><div class="io" style="left:43.0px;top:181px"></div><div class="io" style="left:56.0px;top:181px"></div>
<div class="ob" style="left:127px;top:123px;width:82px;height:17px;font-size:10px;line-height:11px">zl compare Gyro</div><div class="io" style="left:132.0px;top:123px"></div><div class="io" style="left:195.0px;top:123px"></div><div class="io" style="left:132.0px;top:137px"></div><div class="io" style="left:195.0px;top:137px"></div>
<div class="ob" style="left:127px;top:147px;width:44px;height:17px;font-size:10px;line-height:11px">select 1</div><div class="io" style="left:132.0px;top:147px"></div><div class="io" style="left:157.0px;top:147px"></div><div class="io" style="left:132.0px;top:161px"></div><div class="io" style="left:157.0px;top:161px"></div>
<div class="ob" style="left:127px;top:167px;width:32px;height:17px;font-size:10px;line-height:11px">t b b</div><div class="io" style="left:132.0px;top:167px"></div><div class="io" style="left:132.0px;top:181px"></div><div class="io" style="left:145.0px;top:181px"></div>
<div class="ob" style="left:213px;top:123px;width:85px;height:17px;font-size:10px;line-height:11px">zl compare Accel</div><div class="io" style="left:218.0px;top:123px"></div><div class="io" style="left:284.0px;top:123px"></div><div class="io" style="left:218.0px;top:137px"></div><div class="io" style="left:284.0px;top:137px"></div>
<div class="ob" style="left:213px;top:147px;width:44px;height:17px;font-size:10px;line-height:11px">select 1</div><div class="io" style="left:218.0px;top:147px"></div><div class="io" style="left:243.0px;top:147px"></div><div class="io" style="left:218.0px;top:161px"></div><div class="io" style="left:243.0px;top:161px"></div>
<div class="ob" style="left:213px;top:167px;width:32px;height:17px;font-size:10px;line-height:11px">t b b</div><div class="io" style="left:218.0px;top:167px"></div><div class="io" style="left:218.0px;top:181px"></div><div class="io" style="left:231.0px;top:181px"></div>
<div class="ob" style="left:303px;top:123px;width:88px;height:17px;font-size:10px;line-height:11px">zl compare Orient</div><div class="io" style="left:308.0px;top:123px"></div><div class="io" style="left:377.0px;top:123px"></div><div class="io" style="left:308.0px;top:137px"></div><div class="io" style="left:377.0px;top:137px"></div>
<div class="ob" style="left:303px;top:147px;width:44px;height:17px;font-size:10px;line-height:11px">select 1</div><div class="io" style="left:308.0px;top:147px"></div><div class="io" style="left:333.0px;top:147px"></div><div class="io" style="left:308.0px;top:161px"></div><div class="io" style="left:333.0px;top:161px"></div>
<div class="ob" style="left:303px;top:167px;width:32px;height:17px;font-size:10px;line-height:11px">t b b</div><div class="io" style="left:308.0px;top:167px"></div><div class="io" style="left:308.0px;top:181px"></div><div class="io" style="left:321.0px;top:181px"></div>
<div class="a" style="left:39px;top:191px;width:20px;height:20px;border-radius:50%;background:#e9e9e9"></div>
<div class="a" style="left:42px;top:194px;width:14px;height:14px;border-radius:50%;background:#ffdd00"></div>
<div class="ms" style="left:116px;top:192px;width:32px;height:15px;font-size:10px;line-height:15px">1</div>
<div class="ms" style="left:157px;top:192px;width:31px;height:15px;font-size:10px;line-height:15px">2</div>
<div class="ms" style="left:198px;top:192px;width:32px;height:15px;font-size:10px;line-height:15px">3</div>
<div class="ms" style="left:237px;top:192px;width:31px;height:15px;font-size:10px;line-height:15px">4</div>
<div class="nb" style="left:117px;top:223px;width:50px;height:17px;font-size:10px;line-height:13px"><i></i><span style="position:absolute;left:10.5px;top:0">1</span></div>
<div class="ms" style="left:185px;top:223px;width:192px;height:16px;font-size:10px;line-height:16px">EMG 44 21 6 -7 -26 -108 -85 10</div>
<div class="ob" style="left:118px;top:244px;width:58px;height:17px;font-size:10px;line-height:11px">gate 4</div><div class="io" style="left:123.0px;top:244px"></div><div class="io" style="left:162.0px;top:244px"></div><div class="io" style="left:123.0px;top:258px"></div><div class="io" style="left:136.0px;top:258px"></div><div class="io" style="left:149.0px;top:258px"></div><div class="io" style="left:162.0px;top:258px"></div>
<div class="ms" style="left:158px;top:289px;width:50px;height:15px;font-size:10px;line-height:15px">EMG</div>
<div class="ob" style="left:20px;top:310px;width:130px;height:17px;font-size:10px;line-height:11px">unpack Myo 0 0 0 0 0 0 0 0</div><div class="io" style="left:25.0px;top:310px"></div><div class="io" style="left:25.0px;top:324px"></div><div class="io" style="left:38.9px;top:324px"></div><div class="io" style="left:52.8px;top:324px"></div><div class="io" style="left:66.6px;top:324px"></div><div class="io" style="left:80.5px;top:324px"></div><div class="io" style="left:94.4px;top:324px"></div><div class="io" style="left:108.2px;top:324px"></div><div class="io" style="left:122.1px;top:324px"></div><div class="io" style="left:136.0px;top:324px"></div>
<div class="nb" style="left:111px;top:332px;width:39px;height:16px;font-size:10px;line-height:12px"><i></i><span style="position:absolute;left:10.5px;top:0">-69</span></div>
<div class="nb" style="left:111px;top:353px;width:39px;height:16px;font-size:10px;line-height:12px"><i></i><span style="position:absolute;left:10.5px;top:0">-12</span></div>
<div class="nb" style="left:111px;top:374px;width:39px;height:16px;font-size:10px;line-height:12px"><i></i><span style="position:absolute;left:10.5px;top:0">-20</span></div>
<div class="nb" style="left:111px;top:395px;width:39px;height:16px;font-size:10px;line-height:12px"><i></i><span style="position:absolute;left:10.5px;top:0">-8</span></div>
<div class="nb" style="left:111px;top:417px;width:39px;height:16px;font-size:10px;line-height:12px"><i></i><span style="position:absolute;left:10.5px;top:0">-19</span></div>
<div class="nb" style="left:111px;top:438px;width:39px;height:16px;font-size:10px;line-height:12px"><i></i><span style="position:absolute;left:10.5px;top:0">-23</span></div>
<div class="nb" style="left:111px;top:459px;width:39px;height:16px;font-size:10px;line-height:12px"><i></i><span style="position:absolute;left:10.5px;top:0">-39</span></div>
<div class="nb" style="left:111px;top:480px;width:39px;height:16px;font-size:10px;line-height:12px"><i></i><span style="position:absolute;left:10.5px;top:0">-15</span></div>
<div class="ms" style="left:421px;top:83px;width:33px;height:16px;font-size:10px;line-height:16px">1</div>
<div class="nb" style="left:460px;top:83px;width:50px;height:16px;font-size:10px;line-height:12px"><i></i><span style="position:absolute;left:10.5px;top:0">1</span></div>
<div class="nb" style="left:515px;top:83px;width:50px;height:16px;font-size:10px;line-height:12px"><i></i><span style="position:absolute;left:10.5px;top:0">0</span></div>
<div class="ob" style="left:461px;top:103px;width:62px;height:17px;font-size:12px;line-height:11px">pack 0 0</div><div class="io" style="left:466.0px;top:103px"></div><div class="io" style="left:509.0px;top:103px"></div><div class="io" style="left:466.0px;top:117px"></div>
<div class="ob" style="left:461px;top:123px;width:139px;height:19px;font-size:12px;line-height:14px">udpsend 127.0.0.1 8000</div><div class="io" style="left:466.0px;top:123px"></div>
<div class="ms" style="left:623px;top:158px;width:50px;height:16px;font-size:10px;line-height:16px">Orient</div>
<div class="ob" style="left:525px;top:178px;width:89px;height:18px;font-size:10px;line-height:12px">unpack Myo 0 0 0</div><div class="io" style="left:530.0px;top:178px"></div><div class="io" style="left:530.0px;top:193px"></div><div class="io" style="left:553.3px;top:193px"></div><div class="io" style="left:576.7px;top:193px"></div><div class="io" style="left:600.0px;top:193px"></div>
<div class="nb" style="left:572px;top:203px;width:38px;height:17px;font-size:10px;line-height:13px"><i></i><span style="position:absolute;left:10.5px;top:0">109</span></div>
<div class="nb" style="left:572px;top:224px;width:38px;height:17px;font-size:10px;line-height:13px"><i></i><span style="position:absolute;left:10.5px;top:0">124</span></div>
<div class="nb" style="left:572px;top:245px;width:38px;height:17px;font-size:10px;line-height:13px"><i></i><span style="position:absolute;left:10.5px;top:0">87</span></div>
<div class="ms" style="left:623px;top:379px;width:50px;height:16px;font-size:10px;line-height:16px">Gyro</div>
<div class="ob" style="left:525px;top:399px;width:89px;height:18px;font-size:10px;line-height:12px">unpack Myo 0 0 0</div><div class="io" style="left:530.0px;top:399px"></div><div class="io" style="left:530.0px;top:414px"></div><div class="io" style="left:553.3px;top:414px"></div><div class="io" style="left:576.7px;top:414px"></div><div class="io" style="left:600.0px;top:414px"></div>
<div class="nb" style="left:572px;top:423px;width:38px;height:17px;font-size:10px;line-height:13px"><i></i><span style="position:absolute;left:10.5px;top:0">0</span></div>
<div class="nb" style="left:572px;top:444px;width:38px;height:17px;font-size:10px;line-height:13px"><i></i><span style="position:absolute;left:10.5px;top:0">0</span></div>
<div class="nb" style="left:572px;top:465px;width:38px;height:17px;font-size:10px;line-height:13px"><i></i><span style="position:absolute;left:10.5px;top:0">0</span></div>
<div class="ms" style="left:623px;top:605px;width:50px;height:16px;font-size:10px;line-height:16px">Accel</div>
<div class="ob" style="left:525px;top:625px;width:89px;height:18px;font-size:10px;line-height:12px">unpack Myo 0 0 0</div><div class="io" style="left:530.0px;top:625px"></div><div class="io" style="left:530.0px;top:640px"></div><div class="io" style="left:553.3px;top:640px"></div><div class="io" style="left:576.7px;top:640px"></div><div class="io" style="left:600.0px;top:640px"></div>
<div class="nb" style="left:576px;top:645px;width:38px;height:17px;font-size:10px;line-height:13px"><i></i><span style="position:absolute;left:10.5px;top:0">0</span></div>
<div class="nb" style="left:576px;top:666px;width:38px;height:17px;font-size:10px;line-height:13px"><i></i><span style="position:absolute;left:10.5px;top:0">-15</span></div>
<div class="nb" style="left:576px;top:687px;width:38px;height:17px;font-size:10px;line-height:13px"><i></i><span style="position:absolute;left:10.5px;top:0">37</span></div>
<div class="gr" style="left:158px;top:310px;width:195px;height:54px"></div>
<svg class="a" style="left:159px;top:311px" width="193" height="52"><path d="M1.5 26.5V21.9M2.5 26.5V20.4M3.5 26.5V42.0M4.5 26.5V24.9M5.5 26.5V25.6M6.5 26.5V28.1M7.5 26.5V25.6M8.5 26.5V17.7M9.5 26.5V22.5M10.5 26.5V28.4M11.5 26.5V25.7M12.5 26.5V27.5M13.5 26.5V17.7M14.5 26.5V39.6M15.5 26.5V32.2M16.5 26.5V2.5M17.5 26.5V45.5M18.5 26.5V31.9M19.5 26.5V22.5M20.5 26.5V35.6M21.5 26.5V23.8M22.5 26.5V27.1M23.5 26.5V25.8M24.5 26.5V13.4M25.5 26.5V27.9M26.5 26.5V31.7M28.5 26.5V29.3M29.5 26.5V28.4M30.5 26.5V21.8M31.5 26.5V29.0M32.5 26.5V25.8M35.5 26.5V42.1M36.5 26.5V29.5M37.5 26.5V24.2M38.5 26.5V25.4M39.5 26.5V28.5M40.5 26.5V41.5M41.5 26.5V21.8M42.5 26.5V24.6M43.5 26.5V27.9M44.5 26.5V29.6M46.5 26.5V30.2M47.5 26.5V28.2M48.5 26.5V21.5M50.5 26.5V32.6M52.5 26.5V23.8M53.5 26.5V24.3M54.5 26.5V19.5M55.5 26.5V22.8M56.5 26.5V23.2M57.5 26.5V27.9M58.5 26.5V25.5M59.5 26.5V21.8M60.5 26.5V14.5M61.5 26.5V25.9M62.5 26.5V30.2M63.5 26.5V13.6M64.5 26.5V29.8M65.5 26.5V21.4M68.5 26.5V35.9M69.5 26.5V32.2M72.5 26.5V24.0M74.5 26.5V13.9M75.5 26.5V21.0M76.5 26.5V29.8M79.5 26.5V34.6M80.5 26.5V27.3M81.5 26.5V21.0M82.5 26.5V21.8M83.5 26.5V27.4M84.5 26.5V28.7M85.5 26.5V17.4M86.5 26.5V39.2M87.5 26.5V9.5M88.5 26.5V42.5M89.5 26.5V27.7M90.5 26.5V35.3M92.5 26.5V25.8M93.5 26.5V28.2M94.5 26.5V24.7M95.5 26.5V11.7M96.5 26.5V29.1M97.5 26.5V28.2M98.5 26.5V23.2M99.5 26.5V25.2M100.5 26.5V38.5M101.5 26.5V20.9M102.5 26.5V23.9M104.5 26.5V33.2M105.5 26.5V15.3M106.5 26.5V29.9M107.5 26.5V18.1M108.5 26.5V19.0M109.5 26.5V11.8M110.5 26.5V39.1M111.5 26.5V31.8M112.5 26.5V20.5M113.5 26.5V29.0M114.5 26.5V29.6M115.5 26.5V30.9M117.5 26.5V22.7M118.5 26.5V31.2M119.5 26.5V28.4M120.5 26.5V23.4M121.5 26.5V21.3M122.5 26.5V38.3M123.5 26.5V31.3M124.5 26.5V24.2M125.5 26.5V18.6M126.5 26.5V22.6M127.5 26.5V8.5M128.5 26.5V17.6M130.5 26.5V27.5M131.5 26.5V27.9M132.5 26.5V24.6M135.5 26.5V28.6M137.5 26.5V23.7M138.5 26.5V16.1M139.5 26.5V14.5M140.5 26.5V24.4M141.5 26.5V27.8M142.5 26.5V21.1M143.5 26.5V28.5M144.5 26.5V29.1M146.5 26.5V24.6M148.5 26.5V20.1M149.5 26.5V32.5M150.5 26.5V33.0M151.5 26.5V5.0M152.5 26.5V47.5M153.5 26.5V29.3M154.5 26.5V30.4M155.5 26.5V27.1M156.5 26.5V29.2M157.5 26.5V27.1M158.5 26.5V24.8M159.5 26.5V30.2M160.5 26.5V27.8M161.5 26.5V23.4M162.5 26.5V28.1M163.5 26.5V29.6M164.5 26.5V24.5M165.5 26.5V46.6M166.5 26.5V25.0M167.5 26.5V3.5M169.5 26.5V40.4M170.5 26.5V28.8M171.5 26.5V24.6M172.5 26.5V28.8M173.5 26.5V12.1M175.5 26.5V17.4M176.5 26.5V2.5M178.5 26.5V21.6M179.5 26.5V6.5M181.5 26.5V30.4M182.5 26.5V23.5M183.5 26.5V42.4M184.5 26.5V29.0M185.5 26.5V14.8M188.5 26.5V17.5M190.5 26.5V18.5M191.5 26.5V21.8M192.5 26.5V21.3" stroke="#000" stroke-width="1" fill="none"/><line x1="0" y1="26.5" x2="193" y2="26.5" stroke="#000" stroke-width="1"/></svg>
<div class="gr" style="left:158px;top:373px;width:195px;height:54px"></div>
<svg class="a" style="left:159px;top:374px" width="193" height="52"><path d="M0.5 26.5V24.2M1.5 26.5V33.2M2.5 26.5V27.1M3.5 26.5V23.4M5.5 26.5V30.3M6.5 26.5V27.5M7.5 26.5V27.1M9.5 26.5V23.7M10.5 26.5V25.3M11.5 26.5V35.6M12.5 26.5V36.9M13.5 26.5V28.7M15.5 26.5V29.5M16.5 26.5V43.5M17.5 26.5V31.9M18.5 26.5V29.6M19.5 26.5V18.0M20.5 26.5V21.1M21.5 26.5V29.7M22.5 26.5V30.6M23.5 26.5V22.4M24.5 26.5V25.0M25.5 26.5V18.3M27.5 26.5V27.6M28.5 26.5V22.0M29.5 26.5V25.8M30.5 26.5V16.2M33.5 26.5V28.1M34.5 26.5V25.8M35.5 26.5V24.4M36.5 26.5V33.7M37.5 26.5V32.3M38.5 26.5V27.1M40.5 26.5V25.0M41.5 26.5V29.5M42.5 26.5V24.4M43.5 26.5V27.5M44.5 26.5V25.8M45.5 26.5V25.6M46.5 26.5V13.7M47.5 26.5V29.4M48.5 26.5V18.7M49.5 26.5V15.8M50.5 26.5V25.1M51.5 26.5V29.0M52.5 26.5V21.4M53.5 26.5V27.3M54.5 26.5V36.3M55.5 26.5V23.1M56.5 26.5V25.1M57.5 26.5V25.9M58.5 26.5V25.8M59.5 26.5V29.9M60.5 26.5V32.5M62.5 26.5V20.0M63.5 26.5V24.2M64.5 26.5V33.5M65.5 26.5V41.5M67.5 26.5V39.5M68.5 26.5V27.8M69.5 26.5V25.6M70.5 26.5V27.4M71.5 26.5V27.8M72.5 26.5V21.5M73.5 26.5V19.4M74.5 26.5V27.4M76.5 26.5V25.0M77.5 26.5V22.8M78.5 26.5V30.4M80.5 26.5V24.2M81.5 26.5V29.5M82.5 26.5V19.3M83.5 26.5V31.4M85.5 26.5V21.5M88.5 26.5V20.0M89.5 26.5V22.4M90.5 26.5V35.7M91.5 26.5V25.6M92.5 26.5V28.4M93.5 26.5V27.9M94.5 26.5V28.5M95.5 26.5V23.4M96.5 26.5V29.0M97.5 26.5V27.2M100.5 26.5V24.9M102.5 26.5V21.3M103.5 26.5V28.4M104.5 26.5V30.2M105.5 26.5V30.0M106.5 26.5V25.7M107.5 26.5V28.6M108.5 26.5V21.0M109.5 26.5V23.1M110.5 26.5V24.4M113.5 26.5V30.6M116.5 26.5V25.8M117.5 26.5V23.2M118.5 26.5V31.7M119.5 26.5V24.2M120.5 26.5V38.5M121.5 26.5V25.6M122.5 26.5V36.1M123.5 26.5V33.7M124.5 26.5V32.2M125.5 26.5V28.0M127.5 26.5V21.1M129.5 26.5V25.1M130.5 26.5V24.0M131.5 26.5V32.4M132.5 26.5V30.5M133.5 26.5V27.7M134.5 26.5V4.5M135.5 26.5V28.2M137.5 26.5V29.1M138.5 26.5V27.5M139.5 26.5V16.5M140.5 26.5V30.7M141.5 26.5V17.6M142.5 26.5V24.9M143.5 26.5V25.9M144.5 26.5V46.5M145.5 26.5V30.5M148.5 26.5V25.6M149.5 26.5V27.9M150.5 26.5V27.2M151.5 26.5V27.7M152.5 26.5V25.5M153.5 26.5V1.5M154.5 26.5V18.7M155.5 26.5V28.5M157.5 26.5V22.0M158.5 26.5V27.6M159.5 26.5V25.7M161.5 26.5V28.2M163.5 26.5V22.9M164.5 26.5V6.5M165.5 26.5V14.5M166.5 26.5V16.5M167.5 26.5V29.0M168.5 26.5V31.2M169.5 26.5V35.3M171.5 26.5V29.8M173.5 26.5V27.8M174.5 26.5V22.0M175.5 26.5V31.7M176.5 26.5V3.5M177.5 26.5V29.4M178.5 26.5V25.7M180.5 26.5V33.9M181.5 26.5V20.0M182.5 26.5V41.5M183.5 26.5V28.2M184.5 26.5V24.0M185.5 26.5V28.6M186.5 26.5V21.2M187.5 26.5V25.8M188.5 26.5V30.5M189.5 26.5V24.1M191.5 26.5V17.3M192.5 26.5V25.2" stroke="#000" stroke-width="1" fill="none"/><line x1="0" y1="26.5" x2="193" y2="26.5" stroke="#000" stroke-width="1"/></svg>
<div class="gr" style="left:158px;top:436px;width:195px;height:54px"></div>
<svg class="a" style="left:159px;top:437px" width="193" height="52"><path d="M1.5 26.5V28.9M2.5 26.5V28.3M3.5 26.5V25.1M4.5 26.5V22.5M6.5 26.5V28.7M7.5 26.5V25.2M9.5 26.5V28.6M10.5 26.5V25.7M11.5 26.5V23.9M12.5 26.5V22.0M13.5 26.5V24.8M14.5 26.5V28.1M15.5 26.5V22.3M16.5 26.5V25.3M17.5 26.5V28.4M18.5 26.5V25.6M19.5 26.5V31.2M20.5 26.5V33.4M21.5 26.5V31.8M22.5 26.5V2.5M23.5 26.5V27.4M24.5 26.5V31.8M25.5 26.5V28.6M29.5 26.5V27.2M31.5 26.5V23.9M32.5 26.5V29.6M33.5 26.5V30.0M35.5 26.5V27.4M36.5 26.5V31.3M37.5 26.5V25.9M38.5 26.5V28.8M39.5 26.5V45.5M40.5 26.5V29.9M41.5 26.5V29.0M43.5 26.5V25.4M44.5 26.5V22.5M47.5 26.5V24.8M48.5 26.5V31.4M50.5 26.5V32.6M51.5 26.5V25.0M52.5 26.5V27.1M53.5 26.5V24.2M55.5 26.5V23.9M57.5 26.5V33.8M58.5 26.5V5.5M59.5 26.5V25.7M60.5 26.5V25.2M61.5 26.5V28.7M62.5 26.5V28.7M63.5 26.5V28.7M64.5 26.5V25.4M65.5 26.5V35.1M67.5 26.5V25.6M68.5 26.5V27.4M70.5 26.5V29.1M71.5 26.5V21.8M72.5 26.5V27.1M73.5 26.5V30.2M74.5 26.5V29.0M76.5 26.5V24.3M77.5 26.5V28.7M78.5 26.5V25.4M80.5 26.5V25.5M81.5 26.5V25.0M85.5 26.5V25.3M86.5 26.5V22.3M87.5 26.5V27.2M88.5 26.5V28.4M89.5 26.5V27.4M90.5 26.5V30.1M91.5 26.5V25.2M92.5 26.5V29.3M93.5 26.5V25.6M94.5 26.5V22.4M95.5 26.5V24.7M96.5 26.5V27.2M98.5 26.5V27.4M99.5 26.5V24.5M102.5 26.5V25.5M103.5 26.5V29.9M104.5 26.5V24.9M105.5 26.5V30.9M106.5 26.5V29.2M107.5 26.5V6.5M108.5 26.5V50.5M110.5 26.5V24.9M111.5 26.5V22.3M112.5 26.5V29.8M113.5 26.5V31.5M114.5 26.5V28.8M115.5 26.5V29.1M116.5 26.5V25.0M118.5 26.5V19.8M119.5 26.5V25.7M120.5 26.5V29.3M123.5 26.5V25.5M124.5 26.5V28.7M125.5 26.5V22.8M126.5 26.5V31.3M127.5 26.5V25.6M128.5 26.5V27.5M129.5 26.5V29.2M130.5 26.5V23.6M131.5 26.5V31.9M132.5 26.5V24.8M133.5 26.5V27.4M134.5 26.5V21.2M135.5 26.5V27.6M136.5 26.5V27.1M137.5 26.5V21.4M139.5 26.5V23.7M140.5 26.5V23.3M141.5 26.5V28.2M142.5 26.5V23.6M146.5 26.5V28.5M147.5 26.5V24.0M148.5 26.5V24.2M149.5 26.5V27.5M150.5 26.5V24.5M151.5 26.5V23.0M152.5 26.5V18.5M153.5 26.5V17.5M154.5 26.5V19.5M155.5 26.5V27.6M156.5 26.5V23.9M157.5 26.5V22.7M158.5 26.5V24.2M159.5 26.5V35.6M161.5 26.5V5.5M162.5 26.5V50.5M163.5 26.5V31.9M164.5 26.5V24.1M165.5 26.5V25.6M166.5 26.5V27.4M167.5 26.5V27.5M168.5 26.5V24.2M169.5 26.5V27.5M171.5 26.5V29.0M173.5 26.5V25.4M174.5 26.5V28.2M176.5 26.5V18.5M177.5 26.5V38.5M178.5 26.5V36.5M179.5 26.5V25.9M180.5 26.5V27.2M181.5 26.5V38.6M182.5 26.5V24.2M183.5 26.5V27.6M184.5 26.5V28.3M186.5 26.5V25.1M187.5 26.5V23.7M188.5 26.5V27.3M189.5 26.5V28.3M190.5 26.5V24.6M191.5 26.5V23.0M192.5 26.5V24.6" stroke="#000" stroke-width="1" fill="none"/><line x1="0" y1="26.5" x2="193" y2="26.5" stroke="#000" stroke-width="1"/></svg>
<div class="gr" style="left:158px;top:499px;width:195px;height:54px"></div>
<svg class="a" style="left:159px;top:500px" width="193" height="52"><path d="M0.5 26.5V18.0M1.5 26.5V23.6M2.5 26.5V24.5M3.5 26.5V21.6M7.5 26.5V25.3M8.5 26.5V27.7M9.5 26.5V30.4M10.5 26.5V24.6M11.5 26.5V25.1M13.5 26.5V21.6M14.5 26.5V25.7M15.5 26.5V25.3M16.5 26.5V32.0M17.5 26.5V23.9M18.5 26.5V38.6M19.5 26.5V29.8M20.5 26.5V28.3M21.5 26.5V22.7M23.5 26.5V28.8M24.5 26.5V28.3M25.5 26.5V34.5M26.5 26.5V20.5M27.5 26.5V24.7M28.5 26.5V29.0M29.5 26.5V17.9M32.5 26.5V20.2M33.5 26.5V25.6M36.5 26.5V22.0M37.5 26.5V23.5M38.5 26.5V28.1M39.5 26.5V27.4M41.5 26.5V29.0M42.5 26.5V32.7M43.5 26.5V25.6M44.5 26.5V24.0M46.5 26.5V28.3M47.5 26.5V20.5M48.5 26.5V29.9M49.5 26.5V27.1M50.5 26.5V23.3M51.5 26.5V24.6M52.5 26.5V28.9M53.5 26.5V23.6M55.5 26.5V23.9M56.5 26.5V25.1M57.5 26.5V33.7M58.5 26.5V16.5M59.5 26.5V27.5M61.5 26.5V27.8M62.5 26.5V27.8M63.5 26.5V28.9M65.5 26.5V19.1M66.5 26.5V28.1M67.5 26.5V21.6M68.5 26.5V27.7M69.5 26.5V22.7M70.5 26.5V24.1M71.5 26.5V25.8M72.5 26.5V21.6M74.5 26.5V21.2M75.5 26.5V23.7M76.5 26.5V24.1M77.5 26.5V19.6M79.5 26.5V24.5M80.5 26.5V21.1M82.5 26.5V29.9M83.5 26.5V24.5M84.5 26.5V35.3M86.5 26.5V24.5M87.5 26.5V24.8M90.5 26.5V30.3M91.5 26.5V21.2M92.5 26.5V23.9M93.5 26.5V27.1M94.5 26.5V27.5M96.5 26.5V24.2M97.5 26.5V27.7M98.5 26.5V27.6M99.5 26.5V21.6M100.5 26.5V22.3M101.5 26.5V19.4M102.5 26.5V16.6M103.5 26.5V28.1M104.5 26.5V25.3M105.5 26.5V27.3M106.5 26.5V35.5M107.5 26.5V29.2M108.5 26.5V28.0M109.5 26.5V41.8M110.5 26.5V19.6M111.5 26.5V31.0M112.5 26.5V22.4M113.5 26.5V27.7M114.5 26.5V25.4M116.5 26.5V33.4M117.5 26.5V29.4M118.5 26.5V25.1M119.5 26.5V24.8M121.5 26.5V23.3M122.5 26.5V25.6M123.5 26.5V17.5M124.5 26.5V18.3M126.5 26.5V25.8M127.5 26.5V29.8M130.5 26.5V25.3M131.5 26.5V27.8M132.5 26.5V20.5M133.5 26.5V24.5M134.5 26.5V24.9M135.5 26.5V21.9M136.5 26.5V30.0M137.5 26.5V24.7M139.5 26.5V28.4M141.5 26.5V27.9M142.5 26.5V19.1M143.5 26.5V25.4M144.5 26.5V31.4M146.5 26.5V24.8M147.5 26.5V27.7M148.5 26.5V28.2M149.5 26.5V28.4M150.5 26.5V16.5M151.5 26.5V28.1M152.5 26.5V27.3M153.5 26.5V27.1M154.5 26.5V32.9M155.5 26.5V35.7M156.5 26.5V28.9M157.5 26.5V20.9M158.5 26.5V22.9M159.5 26.5V25.1M164.5 26.5V19.7M165.5 26.5V24.4M166.5 26.5V18.9M167.5 26.5V30.0M168.5 26.5V29.1M169.5 26.5V25.8M172.5 26.5V28.1M173.5 26.5V21.9M174.5 26.5V28.7M177.5 26.5V28.4M178.5 26.5V21.9M179.5 26.5V30.2M181.5 26.5V25.5M182.5 26.5V25.3M183.5 26.5V27.8M184.5 26.5V27.3M185.5 26.5V25.4M186.5 26.5V31.9M187.5 26.5V29.4M188.5 26.5V21.2M189.5 26.5V19.3M190.5 26.5V17.5M191.5 26.5V27.1M192.5 26.5V23.8" stroke="#000" stroke-width="1" fill="none"/><line x1="0" y1="26.5" x2="193" y2="26.5" stroke="#000" stroke-width="1"/></svg>
<div class="gr" style="left:158px;top:562px;width:195px;height:54px"></div>
<svg class="a" style="left:159px;top:563px" width="193" height="52"><path d="M0.5 26.5V24.9M1.5 26.5V30.7M4.5 26.5V36.3M5.5 26.5V27.2M6.5 26.5V27.6M7.5 26.5V34.0M8.5 26.5V34.7M9.5 26.5V25.1M10.5 26.5V31.9M11.5 26.5V46.2M13.5 26.5V27.5M14.5 26.5V28.3M16.5 26.5V23.9M17.5 26.5V24.0M19.5 26.5V27.8M20.5 26.5V25.5M21.5 26.5V41.5M22.5 26.5V24.9M23.5 26.5V27.4M25.5 26.5V33.0M26.5 26.5V18.1M27.5 26.5V25.4M28.5 26.5V28.2M30.5 26.5V23.9M31.5 26.5V24.3M32.5 26.5V29.8M33.5 26.5V29.3M35.5 26.5V29.3M36.5 26.5V10.2M37.5 26.5V34.3M38.5 26.5V31.6M39.5 26.5V13.4M40.5 26.5V9.8M41.5 26.5V39.6M42.5 26.5V24.5M43.5 26.5V24.5M45.5 26.5V12.8M46.5 26.5V25.3M47.5 26.5V28.8M48.5 26.5V21.8M50.5 26.5V22.5M51.5 26.5V45.6M52.5 26.5V27.6M54.5 26.5V8.8M56.5 26.5V40.9M57.5 26.5V27.5M58.5 26.5V24.5M59.5 26.5V15.0M60.5 26.5V17.6M61.5 26.5V9.9M62.5 26.5V37.8M65.5 26.5V25.3M66.5 26.5V27.4M67.5 26.5V19.4M68.5 26.5V25.7M69.5 26.5V25.7M70.5 26.5V30.0M72.5 26.5V25.0M73.5 26.5V45.0M74.5 26.5V25.5M75.5 26.5V24.5M76.5 26.5V33.5M77.5 26.5V25.1M80.5 26.5V24.0M81.5 26.5V28.5M82.5 26.5V23.3M83.5 26.5V39.2M84.5 26.5V21.4M85.5 26.5V22.9M87.5 26.5V44.8M88.5 26.5V28.5M89.5 26.5V17.9M92.5 26.5V7.7M93.5 26.5V19.8M94.5 26.5V15.4M95.5 26.5V24.9M96.5 26.5V39.3M97.5 26.5V24.9M98.5 26.5V33.5M99.5 26.5V30.3M101.5 26.5V27.8M102.5 26.5V27.8M103.5 26.5V15.6M104.5 26.5V25.2M105.5 26.5V30.4M106.5 26.5V29.6M107.5 26.5V19.7M109.5 26.5V27.2M110.5 26.5V28.0M111.5 26.5V30.4M112.5 26.5V28.7M113.5 26.5V27.5M115.5 26.5V24.5M116.5 26.5V28.3M117.5 26.5V31.2M118.5 26.5V24.4M119.5 26.5V24.8M122.5 26.5V24.7M123.5 26.5V35.3M124.5 26.5V25.5M125.5 26.5V34.7M126.5 26.5V27.1M127.5 26.5V25.3M128.5 26.5V27.7M129.5 26.5V27.8M130.5 26.5V27.9M131.5 26.5V27.6M132.5 26.5V43.8M133.5 26.5V33.3M134.5 26.5V28.2M135.5 26.5V16.3M136.5 26.5V24.9M137.5 26.5V37.3M138.5 26.5V22.0M139.5 26.5V25.5M140.5 26.5V24.3M141.5 26.5V29.6M142.5 26.5V25.0M143.5 26.5V30.9M144.5 26.5V29.1M145.5 26.5V31.6M146.5 26.5V28.1M148.5 26.5V39.8M149.5 26.5V24.9M150.5 26.5V34.2M151.5 26.5V27.5M152.5 26.5V25.2M155.5 26.5V18.0M156.5 26.5V30.8M157.5 26.5V29.8M158.5 26.5V25.4M160.5 26.5V27.6M161.5 26.5V43.3M162.5 26.5V25.2M163.5 26.5V27.4M164.5 26.5V16.0M166.5 26.5V36.3M167.5 26.5V34.7M168.5 26.5V25.3M169.5 26.5V41.4M170.5 26.5V27.7M172.5 26.5V24.8M173.5 26.5V16.8M174.5 26.5V25.2M175.5 26.5V32.3M176.5 26.5V24.8M178.5 26.5V25.1M179.5 26.5V23.2M180.5 26.5V35.4M181.5 26.5V30.9M182.5 26.5V35.5M183.5 26.5V24.4M185.5 26.5V27.2M186.5 26.5V25.8M187.5 26.5V37.7M189.5 26.5V28.1M190.5 26.5V28.8M191.5 26.5V29.2" stroke="#000" stroke-width="1" fill="none"/><line x1="0" y1="26.5" x2="193" y2="26.5" stroke="#000" stroke-width="1"/></svg>
<div class="gr" style="left:158px;top:625px;width:195px;height:54px"></div>
<svg class="a" style="left:159px;top:626px" width="193" height="52"><path d="M0.5 26.5V25.9M2.5 26.5V30.0M3.5 26.5V23.2M4.5 26.5V22.9M5.5 26.5V35.7M7.5 26.5V50.1M8.5 26.5V21.6M9.5 26.5V25.4M10.5 26.5V27.9M11.5 26.5V24.7M12.5 26.5V37.4M13.5 26.5V13.1M14.5 26.5V38.9M15.5 26.5V3.8M16.5 26.5V18.3M17.5 26.5V23.5M18.5 26.5V44.4M19.5 26.5V27.5M20.5 26.5V24.2M21.5 26.5V42.7M22.5 26.5V6.4M23.5 26.5V12.9M25.5 26.5V25.8M26.5 26.5V48.8M27.5 26.5V47.0M28.5 26.5V24.3M29.5 26.5V23.5M30.5 26.5V2.0M31.5 26.5V31.7M32.5 26.5V11.5M33.5 26.5V17.1M34.5 26.5V41.8M35.5 26.5V24.2M36.5 26.5V28.0M37.5 26.5V33.3M38.5 26.5V40.4M40.5 26.5V21.1M41.5 26.5V24.8M42.5 26.5V14.8M43.5 26.5V25.3M44.5 26.5V27.3M45.5 26.5V36.0M47.5 26.5V14.6M48.5 26.5V30.7M49.5 26.5V42.6M50.5 26.5V10.0M51.5 26.5V24.0M52.5 26.5V28.1M53.5 26.5V13.8M54.5 26.5V46.6M55.5 26.5V10.1M56.5 26.5V37.2M57.5 26.5V11.8M58.5 26.5V2.0M59.5 26.5V29.2M60.5 26.5V11.3M61.5 26.5V22.3M62.5 26.5V4.4M63.5 26.5V2.0M64.5 26.5V18.3M65.5 26.5V6.9M66.5 26.5V45.2M67.5 26.5V16.8M68.5 26.5V17.9M69.5 26.5V33.0M70.5 26.5V51.0M71.5 26.5V33.8M72.5 26.5V27.3M73.5 26.5V22.6M74.5 26.5V24.8M75.5 26.5V38.2M76.5 26.5V28.7M78.5 26.5V28.8M80.5 26.5V25.7M81.5 26.5V32.8M82.5 26.5V37.5M83.5 26.5V27.3M84.5 26.5V6.7M85.5 26.5V7.2M86.5 26.5V29.2M87.5 26.5V34.1M88.5 26.5V27.1M89.5 26.5V6.0M90.5 26.5V18.9M91.5 26.5V45.9M92.5 26.5V27.7M93.5 26.5V23.7M94.5 26.5V24.0M95.5 26.5V23.5M96.5 26.5V50.7M97.5 26.5V27.4M98.5 26.5V17.4M99.5 26.5V28.3M100.5 26.5V37.9M101.5 26.5V21.1M103.5 26.5V24.4M104.5 26.5V24.8M106.5 26.5V39.5M107.5 26.5V15.3M108.5 26.5V44.2M109.5 26.5V41.4M110.5 26.5V27.5M111.5 26.5V6.8M112.5 26.5V27.4M113.5 26.5V16.5M114.5 26.5V31.0M115.5 26.5V50.8M117.5 26.5V51.0M118.5 26.5V4.8M119.5 26.5V31.7M120.5 26.5V33.6M121.5 26.5V17.6M122.5 26.5V13.3M123.5 26.5V21.7M124.5 26.5V50.1M125.5 26.5V27.8M126.5 26.5V15.4M127.5 26.5V12.7M128.5 26.5V27.8M129.5 26.5V40.9M130.5 26.5V9.0M131.5 26.5V24.7M132.5 26.5V29.0M133.5 26.5V27.3M134.5 26.5V34.1M135.5 26.5V18.5M136.5 26.5V35.5M137.5 26.5V22.0M139.5 26.5V19.7M140.5 26.5V38.6M141.5 26.5V31.6M142.5 26.5V46.7M143.5 26.5V18.1M144.5 26.5V51.0M145.5 26.5V27.9M146.5 26.5V50.6M147.5 26.5V13.4M148.5 26.5V18.0M149.5 26.5V19.5M150.5 26.5V32.9M152.5 26.5V32.2M153.5 26.5V46.9M154.5 26.5V21.5M155.5 26.5V3.2M156.5 26.5V11.1M157.5 26.5V30.2M158.5 26.5V47.8M159.5 26.5V16.3M160.5 26.5V25.8M161.5 26.5V24.0M162.5 26.5V29.3M163.5 26.5V30.4M164.5 26.5V40.1M165.5 26.5V17.5M166.5 26.5V10.0M167.5 26.5V49.8M168.5 26.5V17.2M169.5 26.5V2.7M170.5 26.5V14.8M171.5 26.5V16.6M172.5 26.5V47.8M173.5 26.5V39.2M174.5 26.5V38.1M175.5 26.5V48.5M176.5 26.5V25.4M177.5 26.5V19.3M178.5 26.5V24.1M179.5 26.5V50.1M180.5 26.5V40.1M181.5 26.5V49.3M182.5 26.5V30.8M183.5 26.5V20.4M184.5 26.5V25.3M185.5 26.5V29.9M186.5 26.5V14.8M187.5 26.5V28.6M188.5 26.5V44.8M189.5 26.5V49.6M190.5 26.5V27.4M191.5 26.5V36.6M192.5 26.5V28.8" stroke="#000" stroke-width="1" fill="none"/><line x1="0" y1="26.5" x2="193" y2="26.5" stroke="#000" stroke-width="1"/></svg>
<div class="gr" style="left:158px;top:688px;width:195px;height:54px"></div>
<svg class="a" style="left:159px;top:689px" width="193" height="52"><path d="M0.5 26.5V48.2M1.5 26.5V28.0M2.5 26.5V27.9M3.5 26.5V25.8M4.5 26.5V41.7M5.5 26.5V36.2M6.5 26.5V36.4M7.5 26.5V45.4M8.5 26.5V24.3M9.5 26.5V30.3M10.5 26.5V15.0M11.5 26.5V18.1M12.5 26.5V22.4M13.5 26.5V5.1M14.5 26.5V21.3M15.5 26.5V28.2M16.5 26.5V25.5M17.5 26.5V12.4M18.5 26.5V34.1M19.5 26.5V27.7M20.5 26.5V10.1M21.5 26.5V29.2M22.5 26.5V16.5M23.5 26.5V7.3M24.5 26.5V25.2M25.5 26.5V32.2M26.5 26.5V24.1M27.5 26.5V6.0M28.5 26.5V32.9M29.5 26.5V37.6M30.5 26.5V24.3M31.5 26.5V21.0M32.5 26.5V24.5M33.5 26.5V37.3M35.5 26.5V28.0M36.5 26.5V28.6M37.5 26.5V15.0M38.5 26.5V24.2M39.5 26.5V12.0M40.5 26.5V15.5M41.5 26.5V5.2M42.5 26.5V6.1M43.5 26.5V25.6M45.5 26.5V8.8M46.5 26.5V27.1M47.5 26.5V32.2M48.5 26.5V40.0M49.5 26.5V47.7M50.5 26.5V39.2M51.5 26.5V37.7M52.5 26.5V29.1M53.5 26.5V30.8M54.5 26.5V6.3M55.5 26.5V8.8M56.5 26.5V42.6M57.5 26.5V2.0M58.5 26.5V34.4M59.5 26.5V23.0M60.5 26.5V8.9M61.5 26.5V30.5M62.5 26.5V28.2M63.5 26.5V7.6M64.5 26.5V25.3M65.5 26.5V10.2M66.5 26.5V13.3M67.5 26.5V16.6M68.5 26.5V18.9M69.5 26.5V43.8M70.5 26.5V17.5M71.5 26.5V30.2M72.5 26.5V38.0M73.5 26.5V24.3M74.5 26.5V27.8M75.5 26.5V27.4M76.5 26.5V30.9M77.5 26.5V24.4M78.5 26.5V27.4M79.5 26.5V35.7M80.5 26.5V30.4M81.5 26.5V46.8M82.5 26.5V13.2M83.5 26.5V37.1M84.5 26.5V24.5M85.5 26.5V29.5M86.5 26.5V46.0M87.5 26.5V31.0M88.5 26.5V40.5M90.5 26.5V4.1M91.5 26.5V31.3M92.5 26.5V42.9M93.5 26.5V20.3M94.5 26.5V22.8M95.5 26.5V46.0M96.5 26.5V28.9M97.5 26.5V21.9M98.5 26.5V27.1M99.5 26.5V7.1M100.5 26.5V51.0M101.5 26.5V12.2M102.5 26.5V25.2M103.5 26.5V18.2M104.5 26.5V4.4M105.5 26.5V30.0M106.5 26.5V25.2M107.5 26.5V24.5M108.5 26.5V39.4M109.5 26.5V25.2M110.5 26.5V28.9M111.5 26.5V12.5M112.5 26.5V8.5M113.5 26.5V34.7M114.5 26.5V4.6M115.5 26.5V27.9M116.5 26.5V37.7M117.5 26.5V32.4M118.5 26.5V42.0M119.5 26.5V4.5M120.5 26.5V16.9M121.5 26.5V15.2M122.5 26.5V23.4M123.5 26.5V29.8M124.5 26.5V36.3M125.5 26.5V20.2M126.5 26.5V22.3M127.5 26.5V35.0M128.5 26.5V21.7M129.5 26.5V7.5M130.5 26.5V33.0M131.5 26.5V19.6M132.5 26.5V31.8M133.5 26.5V40.8M134.5 26.5V50.7M135.5 26.5V23.5M136.5 26.5V22.3M137.5 26.5V27.6M138.5 26.5V4.0M139.5 26.5V18.2M140.5 26.5V43.8M141.5 26.5V2.0M142.5 26.5V15.2M143.5 26.5V28.9M144.5 26.5V25.6M145.5 26.5V28.9M147.5 26.5V16.2M148.5 26.5V41.6M149.5 26.5V21.3M150.5 26.5V27.3M151.5 26.5V8.5M152.5 26.5V33.2M153.5 26.5V8.3M154.5 26.5V35.4M155.5 26.5V27.7M156.5 26.5V24.7M157.5 26.5V33.9M158.5 26.5V24.8M159.5 26.5V41.1M160.5 26.5V40.3M161.5 26.5V32.2M162.5 26.5V40.1M164.5 26.5V28.9M165.5 26.5V13.5M166.5 26.5V27.3M167.5 26.5V29.9M168.5 26.5V4.9M169.5 26.5V28.2M170.5 26.5V16.9M171.5 26.5V36.3M172.5 26.5V29.2M173.5 26.5V44.7M174.5 26.5V30.1M175.5 26.5V44.1M176.5 26.5V10.5M177.5 26.5V31.9M178.5 26.5V4.3M179.5 26.5V28.0M180.5 26.5V48.1M181.5 26.5V25.0M182.5 26.5V8.9M183.5 26.5V42.6M184.5 26.5V48.2M185.5 26.5V39.4M186.5 26.5V30.4M187.5 26.5V4.4M188.5 26.5V19.5M189.5 26.5V41.0M190.5 26.5V31.9M191.5 26.5V40.4M192.5 26.5V19.5" stroke="#000" stroke-width="1" fill="none"/><line x1="0" y1="26.5" x2="193" y2="26.5" stroke="#000" stroke-width="1"/></svg>
<div class="gr" style="left:158px;top:751px;width:195px;height:54px"></div>
<svg class="a" style="left:159px;top:752px" width="193" height="52"><path d="M0.5 26.5V14.8M1.5 26.5V17.3M2.5 26.5V51.0M3.5 26.5V14.5M5.5 26.5V38.4M7.5 26.5V23.3M8.5 26.5V21.7M9.5 26.5V6.6M10.5 26.5V19.2M11.5 26.5V43.9M12.5 26.5V24.9M13.5 26.5V30.7M14.5 26.5V8.9M15.5 26.5V28.3M16.5 26.5V8.4M17.5 26.5V28.1M18.5 26.5V19.6M19.5 26.5V17.0M20.5 26.5V27.7M22.5 26.5V25.5M23.5 26.5V33.5M24.5 26.5V5.8M25.5 26.5V28.1M26.5 26.5V28.2M27.5 26.5V18.2M28.5 26.5V25.3M29.5 26.5V23.6M30.5 26.5V24.5M31.5 26.5V3.3M32.5 26.5V47.9M33.5 26.5V37.1M34.5 26.5V31.5M35.5 26.5V24.9M36.5 26.5V13.3M37.5 26.5V28.8M38.5 26.5V2.3M39.5 26.5V48.6M40.5 26.5V6.4M41.5 26.5V12.4M42.5 26.5V17.9M43.5 26.5V25.2M44.5 26.5V24.2M45.5 26.5V45.6M46.5 26.5V18.2M47.5 26.5V8.0M49.5 26.5V33.3M51.5 26.5V45.3M52.5 26.5V24.8M53.5 26.5V42.1M54.5 26.5V23.8M55.5 26.5V23.5M56.5 26.5V28.7M57.5 26.5V31.9M58.5 26.5V16.7M59.5 26.5V34.2M60.5 26.5V36.4M61.5 26.5V29.6M62.5 26.5V28.6M63.5 26.5V28.2M64.5 26.5V29.2M65.5 26.5V30.9M66.5 26.5V36.4M67.5 26.5V34.1M68.5 26.5V43.9M70.5 26.5V28.2M71.5 26.5V11.8M72.5 26.5V14.3M73.5 26.5V30.0M74.5 26.5V21.9M75.5 26.5V27.2M77.5 26.5V42.2M78.5 26.5V24.1M79.5 26.5V24.9M80.5 26.5V24.9M81.5 26.5V23.3M84.5 26.5V28.0M85.5 26.5V27.7M88.5 26.5V14.2M89.5 26.5V30.6M90.5 26.5V39.0M92.5 26.5V12.4M93.5 26.5V50.7M94.5 26.5V27.7M95.5 26.5V8.7M97.5 26.5V24.4M98.5 26.5V23.3M99.5 26.5V11.7M101.5 26.5V9.1M103.5 26.5V22.8M104.5 26.5V24.9M105.5 26.5V31.3M106.5 26.5V15.4M107.5 26.5V25.7M109.5 26.5V28.6M110.5 26.5V45.7M111.5 26.5V44.7M112.5 26.5V24.8M113.5 26.5V35.9M114.5 26.5V45.8M115.5 26.5V3.8M116.5 26.5V37.2M117.5 26.5V29.2M118.5 26.5V24.2M119.5 26.5V45.9M120.5 26.5V21.6M121.5 26.5V25.8M122.5 26.5V8.5M123.5 26.5V40.5M124.5 26.5V36.2M125.5 26.5V24.4M126.5 26.5V37.2M127.5 26.5V30.7M128.5 26.5V13.8M129.5 26.5V33.6M132.5 26.5V36.8M135.5 26.5V25.1M136.5 26.5V29.0M137.5 26.5V44.3M138.5 26.5V43.6M139.5 26.5V29.1M140.5 26.5V27.4M141.5 26.5V40.2M142.5 26.5V24.9M143.5 26.5V8.0M144.5 26.5V11.1M145.5 26.5V19.2M146.5 26.5V27.9M147.5 26.5V20.3M148.5 26.5V24.9M149.5 26.5V41.5M150.5 26.5V12.6M151.5 26.5V5.0M152.5 26.5V48.5M153.5 26.5V25.4M154.5 26.5V25.7M155.5 26.5V33.5M156.5 26.5V25.1M157.5 26.5V4.3M158.5 26.5V24.1M159.5 26.5V51.0M160.5 26.5V32.7M161.5 26.5V27.3M162.5 26.5V13.1M163.5 26.5V6.7M164.5 26.5V27.2M166.5 26.5V13.4M167.5 26.5V27.5M169.5 26.5V10.9M170.5 26.5V25.8M171.5 26.5V19.3M172.5 26.5V24.9M173.5 26.5V2.1M174.5 26.5V34.5M175.5 26.5V28.5M176.5 26.5V19.6M177.5 26.5V27.9M179.5 26.5V28.9M180.5 26.5V18.7M181.5 26.5V20.3M182.5 26.5V36.8M183.5 26.5V17.0M184.5 26.5V39.3M185.5 26.5V27.9M186.5 26.5V19.0M187.5 26.5V25.7M188.5 26.5V31.9M189.5 26.5V39.3M190.5 26.5V24.7M191.5 26.5V33.1M192.5 26.5V11.6" stroke="#000" stroke-width="1" fill="none"/><line x1="0" y1="26.5" x2="193" y2="26.5" stroke="#000" stroke-width="1"/></svg>
<div class="gr" style="left:623px;top:178px;width:195px;height:54px"></div>
<svg class="a" style="left:624px;top:179px" width="193" height="52"><polygon points="0.00,50.30 0.00,30.00 24.50,30.40 32.00,39.75 37.00,39.75 46.00,25.20 49.80,28.60 57.10,38.70 60.60,38.70 71.00,26.20 82.10,39.75 90.40,25.20 94.60,25.20 96.00,28.00 105.00,38.00 115.40,25.90 127.25,39.75 129.30,39.75 143.20,23.80 153.60,40.40 166.10,24.80 174.50,41.50 182.80,41.50 191.10,23.10 193.50,23.80 193.50,50.30" fill="#000" stroke="#000" stroke-width="0.8" stroke-linejoin="round"/></svg>
<div class="gr" style="left:623px;top:241px;width:195px;height:54px"></div>
<svg class="a" style="left:624px;top:242px" width="193" height="52"><polygon points="-0.20,50.30 -0.20,26.90 7.80,26.90 9.90,25.20 12.00,23.80 16.80,18.20 19.60,18.20 25.20,27.60 31.40,28.00 33.80,30.00 37.70,29.00 41.10,18.90 42.50,15.10 44.60,18.90 48.80,18.20 51.60,19.60 57.10,28.00 60.60,27.60 66.80,18.60 73.80,19.30 82.10,30.00 86.30,19.60 90.40,20.00 94.60,18.20 96.00,18.20 98.80,19.30 104.30,24.10 106.40,24.10 110.60,20.00 116.10,21.00 118.20,18.90 120.30,19.30 129.00,30.00 137.70,16.10 140.40,16.10 145.30,20.00 148.80,20.30 154.70,26.90 159.90,11.30 163.70,11.30 170.30,24.80 176.60,26.90 182.80,26.20 187.00,12.30 188.40,12.30 191.80,18.20 193.60,14.00 193.60,50.30" fill="#000" stroke="#000" stroke-width="0.8" stroke-linejoin="round"/></svg>
<div class="gr" style="left:623px;top:304px;width:195px;height:54px"></div>
<svg class="a" style="left:624px;top:305px" width="193" height="52"><polygon points="-0.20,50.60 -0.20,34.20 10.60,34.20 11.60,33.00 14.40,32.20 16.80,32.20 19.30,33.00 23.80,30.10 28.60,30.10 33.50,34.20 39.75,37.00 45.30,29.00 47.40,29.00 54.30,34.20 62.00,35.10 71.00,29.00 77.25,34.20 80.00,34.20 83.80,36.00 89.00,30.10 96.00,29.00 98.00,30.10 102.25,33.20 107.50,34.90 112.00,29.40 116.10,28.00 121.70,32.80 129.30,32.80 135.60,34.20 140.40,30.10 142.50,29.00 146.70,31.10 150.90,34.20 157.10,37.00 164.75,30.10 171.70,29.00 179.30,30.10 186.30,36.30 189.00,29.00 193.60,29.00 193.60,50.60" fill="#000" stroke="#000" stroke-width="0.8" stroke-linejoin="round"/></svg>
<div class="gr" style="left:623px;top:399px;width:195px;height:54px"></div>
<svg class="a" style="left:624px;top:400px" width="193" height="52"><polygon points="-0.20,26.20 -0.20,26.50 2.00,25.00 3.50,26.50 5.00,25.80 6.00,26.50 14.00,26.20 15.00,25.50 20.00,25.50 20.30,26.50 23.80,26.50 24.10,25.50 26.60,19.20 28.60,20.30 30.00,23.40 32.50,24.40 33.20,25.80 35.00,26.50 37.70,26.50 40.40,30.70 45.30,26.50 46.70,24.40 49.50,21.30 53.60,22.40 57.10,25.10 58.50,26.50 64.75,29.70 68.20,27.20 70.30,28.30 71.00,25.80 73.80,21.30 79.30,23.40 81.80,25.80 85.60,31.40 90.40,27.60 94.60,25.80 96.00,21.70 98.80,21.30 103.60,25.80 107.80,29.70 113.40,29.30 115.80,26.50 116.80,22.70 119.60,22.40 125.20,23.40 127.90,25.80 132.80,29.70 139.00,28.60 143.20,25.80 145.30,20.30 150.20,20.30 152.90,25.50 157.10,29.70 164.75,27.90 166.10,25.50 168.20,21.30 171.30,17.50 175.20,24.80 175.90,26.50 180.00,26.50 186.30,31.70 192.20,25.80 192.90,23.40 193.60,23.40 193.60,26.20" fill="#000" stroke="#000" stroke-width="0.8" stroke-linejoin="round"/><line x1="0" y1="26.20" x2="193" y2="26.20" stroke="#000" stroke-width="1"/></svg>
<div class="gr" style="left:623px;top:462px;width:195px;height:54px"></div>
<svg class="a" style="left:624px;top:463px" width="193" height="52"><polygon points="0,27.2 0.0,27.14 1.0,27.50 2.0,26.98 3.0,27.28 4.0,26.89 5.0,27.53 6.0,27.55 7.0,27.14 8.0,27.04 9.0,26.96 10.0,27.05 11.0,27.42 12.0,27.03 13.0,27.40 14.0,27.00 15.0,26.88 16.0,27.29 17.0,27.40 18.0,26.93 19.0,25.98 20.0,24.66 21.0,24.33 22.0,23.47 23.0,24.00 24.0,24.72 25.0,26.16 26.0,27.15 27.0,27.66 28.0,28.73 29.0,29.14 30.0,29.43 31.0,28.75 32.0,28.68 33.0,27.82 34.0,27.67 35.0,27.23 36.0,27.38 37.0,27.11 38.0,27.37 39.0,26.97 40.0,27.34 41.0,27.52 42.0,25.76 43.0,23.39 44.0,23.13 45.0,25.88 46.0,27.07 47.0,26.96 48.0,27.49 49.0,27.12 50.0,26.91 51.0,26.95 52.0,27.15 53.0,27.40 54.0,26.96 55.0,27.20 56.0,27.30 57.0,27.46 58.0,27.39 59.0,27.06 60.0,27.19 61.0,27.16 62.0,27.06 63.0,27.45 64.0,27.08 65.0,26.91 66.0,26.93 67.0,27.23 68.0,26.85 69.0,27.53 70.0,27.40 71.0,27.22 72.0,27.10 73.0,27.13 74.0,27.36 75.0,26.94 76.0,26.34 77.0,27.00 78.0,27.36 79.0,26.99 80.0,27.51 81.0,26.86 82.0,27.29 83.0,27.36 84.0,27.02 85.0,26.96 86.0,26.77 87.0,25.34 88.0,24.95 89.0,25.36 90.0,26.24 91.0,27.34 92.0,27.32 93.0,26.90 94.0,27.31 95.0,27.35 96.0,26.87 97.0,27.21 98.0,27.09 99.0,26.90 100.0,27.24 101.0,27.08 102.0,27.14 103.0,27.38 104.0,27.12 105.0,26.91 106.0,27.49 107.0,26.89 108.0,26.48 109.0,25.35 110.0,24.96 111.0,25.26 112.0,26.80 113.0,26.94 114.0,26.99 115.0,27.15 116.0,27.01 117.0,27.25 118.0,27.46 119.0,26.92 120.0,27.41 121.0,27.36 122.0,27.31 123.0,27.44 124.0,27.09 125.0,27.46 126.0,26.95 127.0,26.88 128.0,27.11 129.0,27.03 130.0,27.13 131.0,27.43 132.0,26.95 133.0,27.32 134.0,27.43 135.0,26.62 136.0,26.03 137.0,26.73 138.0,26.96 139.0,27.46 140.0,27.39 141.0,26.88 142.0,27.49 143.0,27.17 144.0,27.53 145.0,26.99 146.0,27.13 147.0,27.24 148.0,27.18 149.0,27.47 150.0,27.42 151.0,27.40 152.0,27.52 153.0,26.88 154.0,27.55 155.0,27.39 156.0,26.95 157.0,27.21 158.0,27.39 159.0,26.97 160.0,27.20 161.0,26.90 162.0,26.84 163.0,25.93 164.0,24.77 165.0,23.64 166.0,23.43 167.0,23.85 168.0,24.63 169.0,25.94 170.0,27.02 171.0,27.26 172.0,27.44 173.0,27.29 174.0,27.24 175.0,27.37 176.0,27.38 177.0,27.35 178.0,26.92 179.0,27.45 180.0,28.08 181.0,29.06 182.0,29.04 183.0,28.58 184.0,28.19 185.0,27.32 186.0,25.99 187.0,24.10 188.0,22.83 189.0,23.56 190.0,26.23 191.0,27.37 192.0,27.03 193.0,27.19 193,27.2" fill="#000"/><line x1="0" y1="27.2" x2="193" y2="27.2" stroke="#000" stroke-width="1"/></svg>
<div class="gr" style="left:623px;top:525px;width:195px;height:54px"></div>
<svg class="a" style="left:624px;top:526px" width="193" height="52"><polygon points="0,27.3 0.0,27.07 1.0,26.97 2.0,27.32 3.0,27.09 4.0,27.17 5.0,27.23 6.0,27.55 7.0,27.46 8.0,27.34 9.0,27.27 10.0,27.63 11.0,27.50 12.0,27.05 13.0,27.11 14.0,26.99 15.0,27.52 16.0,27.34 17.0,27.56 18.0,27.46 19.0,27.25 20.0,27.64 21.0,27.25 22.0,27.01 23.0,27.14 24.0,27.59 25.0,27.44 26.0,27.26 27.0,27.06 28.0,27.00 29.0,27.12 30.0,27.60 31.0,27.30 32.0,27.16 33.0,27.42 34.0,27.43 35.0,27.44 36.0,27.00 37.0,27.82 38.0,28.85 39.0,30.43 40.0,31.90 41.0,32.50 42.0,32.89 43.0,31.52 44.0,29.65 45.0,28.24 46.0,27.26 47.0,27.10 48.0,26.57 49.0,25.48 50.0,25.18 51.0,24.58 52.0,24.27 53.0,24.76 54.0,25.04 55.0,25.46 56.0,26.64 57.0,26.94 58.0,27.18 59.0,27.51 60.0,27.68 61.0,27.65 62.0,28.76 63.0,29.72 64.0,30.38 65.0,30.70 66.0,29.99 67.0,29.03 68.0,28.31 69.0,27.57 70.0,27.63 71.0,27.24 72.0,26.43 73.0,25.96 74.0,24.84 75.0,24.80 76.0,24.47 77.0,24.26 78.0,25.37 79.0,26.15 80.0,26.39 81.0,27.21 82.0,27.91 83.0,29.38 84.0,30.65 85.0,31.34 86.0,31.70 87.0,30.84 88.0,30.00 89.0,28.34 90.0,27.90 91.0,27.16 92.0,27.49 93.0,27.36 94.0,27.09 95.0,26.81 96.0,26.51 97.0,25.44 98.0,24.96 99.0,24.64 100.0,25.01 101.0,25.17 102.0,25.65 103.0,26.72 104.0,27.14 105.0,26.94 106.0,27.76 107.0,28.48 108.0,29.44 109.0,30.37 110.0,31.09 111.0,30.60 112.0,29.87 113.0,28.29 114.0,27.75 115.0,27.30 116.0,26.80 117.0,26.19 118.0,25.93 119.0,25.24 120.0,24.98 121.0,24.99 122.0,24.87 123.0,25.66 124.0,26.20 125.0,26.68 126.0,27.52 127.0,27.20 128.0,27.60 129.0,27.56 130.0,27.92 131.0,28.96 132.0,29.50 133.0,29.74 134.0,29.27 135.0,29.08 136.0,28.31 137.0,27.25 138.0,27.55 139.0,27.61 140.0,27.49 141.0,27.60 142.0,27.61 143.0,27.13 144.0,26.96 145.0,26.14 146.0,25.14 147.0,24.79 148.0,24.79 149.0,24.84 150.0,25.51 151.0,26.36 152.0,26.55 153.0,27.89 154.0,29.53 155.0,30.53 156.0,31.46 157.0,31.35 158.0,30.71 159.0,29.35 160.0,27.89 161.0,27.13 162.0,27.20 163.0,27.46 164.0,27.05 165.0,27.07 166.0,27.23 167.0,27.08 168.0,27.13 169.0,27.40 170.0,27.60 171.0,27.20 172.0,27.16 173.0,27.00 174.0,27.52 175.0,27.61 176.0,27.25 177.0,27.38 178.0,27.49 179.0,27.06 180.0,27.01 181.0,27.30 182.0,27.77 183.0,28.78 184.0,30.36 185.0,31.40 186.0,31.66 187.0,31.50 188.0,30.15 189.0,28.62 190.0,27.78 191.0,27.23 192.0,26.98 193.0,27.21 193,27.3" fill="#000"/><line x1="0" y1="27.3" x2="193" y2="27.3" stroke="#000" stroke-width="1"/></svg>
<div class="gr" style="left:623px;top:625px;width:195px;height:54px"></div>
<svg class="a" style="left:624px;top:626px" width="193" height="52"><polygon points="0,27 0.0,26.40 1.0,27.30 2.0,26.87 3.0,27.49 4.0,27.11 5.0,27.02 6.0,27.47 7.0,27.19 8.0,26.41 9.0,26.41 10.0,26.87 11.0,27.23 12.0,28.14 13.0,29.52 14.0,30.09 15.0,29.86 16.0,31.18 17.0,31.40 18.0,30.85 19.0,30.48 20.0,29.25 21.0,29.01 22.0,28.64 23.0,28.08 24.0,27.29 25.0,26.96 26.0,27.52 27.0,26.80 28.0,26.80 29.0,26.10 30.0,25.39 31.0,25.28 32.0,25.48 33.0,25.96 34.0,26.40 35.0,26.50 36.0,27.25 37.0,28.58 38.0,29.34 39.0,30.73 40.0,32.99 41.0,32.99 42.0,33.96 43.0,34.33 44.0,33.27 45.0,32.23 46.0,30.71 47.0,30.10 48.0,28.72 49.0,27.86 50.0,26.83 51.0,26.60 52.0,26.58 53.0,27.03 54.0,27.20 55.0,26.96 56.0,26.97 57.0,27.34 58.0,26.62 59.0,27.23 60.0,26.35 61.0,25.88 62.0,26.44 63.0,27.81 64.0,29.86 65.0,30.25 66.0,31.21 67.0,32.29 68.0,32.24 69.0,32.19 70.0,30.77 71.0,30.36 72.0,29.83 73.0,28.77 74.0,27.90 75.0,27.51 76.0,27.54 77.0,26.42 78.0,27.48 79.0,27.04 80.0,27.47 81.0,26.90 82.0,27.50 83.0,27.44 84.0,27.43 85.0,27.10 86.0,28.22 87.0,29.62 88.0,30.50 89.0,30.67 90.0,30.76 91.0,30.47 92.0,29.94 93.0,29.26 94.0,27.94 95.0,27.19 96.0,26.63 97.0,27.32 98.0,27.39 99.0,27.24 100.0,27.24 101.0,27.00 102.0,27.00 103.0,27.13 104.0,27.20 105.0,26.39 106.0,26.30 107.0,26.63 108.0,27.55 109.0,27.90 110.0,28.61 111.0,28.60 112.0,29.70 113.0,29.56 114.0,29.89 115.0,29.87 116.0,29.58 117.0,29.21 118.0,27.81 119.0,28.10 120.0,27.14 121.0,27.02 122.0,27.44 123.0,27.47 124.0,26.93 125.0,27.00 126.0,26.41 127.0,26.70 128.0,26.68 129.0,27.58 130.0,26.48 131.0,26.52 132.0,27.40 133.0,27.83 134.0,28.38 135.0,28.87 136.0,29.31 137.0,30.07 138.0,30.37 139.0,31.07 140.0,30.42 141.0,30.50 142.0,30.40 143.0,29.96 144.0,28.52 145.0,28.30 146.0,27.51 147.0,26.88 148.0,26.66 149.0,27.04 150.0,27.58 151.0,27.34 152.0,27.34 153.0,26.80 154.0,27.04 155.0,26.72 156.0,27.04 157.0,27.94 158.0,29.27 159.0,30.36 160.0,31.58 161.0,31.97 162.0,32.83 163.0,32.93 164.0,32.69 165.0,32.66 166.0,30.86 167.0,30.03 168.0,29.05 169.0,27.83 170.0,26.80 171.0,26.82 172.0,26.90 173.0,27.14 174.0,27.00 175.0,27.06 176.0,27.24 177.0,26.93 178.0,27.12 179.0,27.49 180.0,27.17 181.0,28.44 182.0,29.32 183.0,31.11 184.0,32.14 185.0,33.45 186.0,34.32 187.0,35.12 188.0,34.35 189.0,33.70 190.0,32.91 191.0,31.23 192.0,29.85 193.0,27.80 193,27" fill="#000"/><line x1="0" y1="27" x2="193" y2="27" stroke="#000" stroke-width="1"/></svg>
<div class="gr" style="left:623px;top:688px;width:195px;height:54px"></div>
<svg class="a" style="left:624px;top:689px" width="193" height="52"><polygon points="-0.20,26.10 -0.20,28.60 4.30,29.60 13.40,29.30 14.40,27.20 16.80,29.60 23.80,29.60 26.60,33.10 28.30,36.60 32.10,33.10 36.30,33.10 40.40,32.40 43.90,26.80 45.65,25.10 47.40,26.50 50.90,27.50 55.00,33.40 64.00,32.40 67.50,27.50 70.30,26.80 74.50,28.20 78.60,32.40 85.60,33.40 89.00,27.50 92.50,25.40 96.00,25.80 96.00,26.50 100.20,30.70 105.00,32.70 109.20,32.40 115.40,25.40 116.80,26.10 121.00,30.70 124.50,33.40 133.50,33.40 138.40,26.80 143.90,23.70 145.65,25.80 148.80,28.90 150.50,35.50 156.40,33.40 163.40,26.50 165.40,24.40 167.50,25.40 171.00,26.80 173.10,34.50 176.20,35.90 182.10,32.40 188.40,26.80 190.40,23.40 193.60,25.10 193.60,26.10" fill="#000" stroke="#000" stroke-width="0.8" stroke-linejoin="round"/><line x1="0" y1="26.10" x2="193" y2="26.10" stroke="#000" stroke-width="1"/></svg>
<div class="gr" style="left:623px;top:751px;width:195px;height:54px"></div>
<svg class="a" style="left:624px;top:752px" width="193" height="52"><polygon points="-0.20,26.00 -0.20,19.30 8.50,19.30 9.50,17.90 12.70,18.30 14.75,19.70 23.80,19.30 26.60,22.40 28.60,25.20 29.30,26.60 37.00,26.60 39.00,23.10 41.80,22.10 44.60,17.20 47.40,18.30 51.60,20.40 54.30,21.40 55.70,25.60 56.40,26.60 59.90,26.60 61.30,24.50 65.40,20.70 70.30,17.20 79.30,25.60 81.40,26.60 82.80,26.30 88.40,18.60 89.75,17.20 96.00,17.90 98.80,18.30 100.20,22.80 102.25,22.10 104.30,25.20 113.40,16.20 115.40,16.50 122.40,21.75 124.50,23.50 128.00,26.60 130.00,26.30 137.00,19.30 140.40,17.90 143.90,17.20 147.40,20.00 150.90,25.60 155.70,26.60 156.40,24.50 158.50,22.80 163.40,21.75 164.75,18.60 166.80,16.90 170.30,19.30 171.70,25.90 173.10,26.60 179.30,28.00 180.40,30.80 183.50,26.60 186.30,24.50 189.00,18.30 190.80,17.90 191.80,21.75 193.20,19.30 193.20,26.00" fill="#000" stroke="#000" stroke-width="0.8" stroke-linejoin="round"/><line x1="0" y1="26.00" x2="193" y2="26.00" stroke="#000" stroke-width="1"/></svg>
<div class="win" style="left:740px;top:23px;width:128px;height:150px;background:#e4e4e4;box-shadow:0 12px 42px rgba(0,0,0,.68);border-radius:5px">
<div class="a" style="left:0;top:0;width:128px;height:22px;background:linear-gradient(#ebebeb,#dedede);border-bottom:1px solid #c9c9c9"></div>
<div class="a" style="left:8px;top:5px;width:12px;height:12px;border-radius:50%;background:#fc3d39"></div>
<div class="a" style="left:28px;top:5px;width:12px;height:12px;border-radius:50%;background:#fdbb11"></div>
<div class="a" style="left:48px;top:5px;width:12px;height:12px;border-radius:50%;background:#d9d9d9"></div>
<div class="a" style="left:69px;top:4px;font:13px 'Liberation Sans',sans-serif;color:#4a4a4a">Myo_...</div>
<div class="a" style="left:14px;top:36px;width:100px;height:100px;background:#cfcfcf"></div>
</div>
<div class="a" style="left:1025px;top:700px;width:399px;height:184px;background:#dcdcdc;border-radius:0 0 5px 5px;box-shadow:0 1px 3px rgba(0,0,0,.3)"></div>
<div class="a" style="left:1380px;top:680px;width:44px;height:204px;border-radius:5px 5px 5px 5px;background:linear-gradient(to bottom,#ececec 0,#e6e6e6 20px,#cfcfcf 21px,#c9c9c9 42px,#e9e9e9 43px,#e9e9e9 60px,#dadada 61px,#dadada 77px,#e9e9e9 78px,#e9e9e9 94px,#dadada 95px,#dadada 111px,#e9e9e9 112px,#e9e9e9 128px,#dadada 129px,#dadada 145px,#e9e9e9 146px,#e9e9e9 162px,#dadada 163px,#dadada 179px,#e9e9e9 180px);box-shadow:0 1px 3px rgba(0,0,0,.3)"></div>
<div class="win" style="left:887px;top:47px;width:521px;height:834px;background:#fff;box-shadow:0 2px 6px rgba(0,0,0,.35)">
<div class="a" style="left:0;top:0;width:521px;height:22px;background:#f5f5f5"></div>
<div class="a" style="left:8px;top:5px;width:12px;height:12px;border-radius:50%;background:#dedede;border:1px solid #d2d2d2"></div>
<div class="a" style="left:28px;top:5px;width:12px;height:12px;border-radius:50%;background:#dedede;border:1px solid #d2d2d2"></div>
<div class="a" style="left:48px;top:5px;width:12px;height:12px;border-radius:50%;background:#dedede;border:1px solid #d2d2d2"></div>
<svg class="a" style="left:153px;top:3px" width="14" height="17"><path d="M1.5 1.5H8.5L12.5 5.5V15.5H1.5Z M8.5 1.5V5.5H12.5" fill="#fafafa" stroke="#c4c4c4" stroke-width="1"/></svg>
<div class="a" style="left:171px;top:3px;font:13.6px 'Liberation Sans',sans-serif;color:#acacac">Myo_Max_05 | Processing 2.2.1</div>
<div class="a" style="left:0;top:22px;width:521px;height:61px;background:#000"></div>
<svg class="a" style="left:0;top:22px" width="521" height="61"><g transform="translate(0,-22)"><line x1="138" y1="50" x2="188" y2="50" stroke="#6a8fb8" stroke-width="1.1" stroke-opacity=".9"/><line x1="138" y1="50" x2="143" y2="22" stroke="#8a97a4" stroke-width="1.1" stroke-opacity=".9"/><line x1="138" y1="50" x2="154" y2="65" stroke="#9aa0a8" stroke-width="1.1" stroke-opacity=".9"/><line x1="154" y1="65" x2="206" y2="81" stroke="#5f7fa6" stroke-width="1.1" stroke-opacity=".9"/><line x1="188" y1="50" x2="226" y2="28" stroke="#aab3bb" stroke-width="1.1" stroke-opacity=".9"/><line x1="154" y1="65" x2="103" y2="76" stroke="#6a8fb8" stroke-width="1.1" stroke-opacity=".9"/><line x1="41" y1="22" x2="53" y2="47" stroke="#8a97a4" stroke-width="1.1" stroke-opacity=".9"/><line x1="53" y1="47" x2="58" y2="56" stroke="#9aa0a8" stroke-width="1.1" stroke-opacity=".9"/><line x1="58" y1="56" x2="73" y2="83" stroke="#5f7fa6" stroke-width="1.1" stroke-opacity=".9"/><line x1="53" y1="47" x2="13" y2="83" stroke="#aab3bb" stroke-width="1.1" stroke-opacity=".9"/><line x1="53" y1="47" x2="78" y2="23" stroke="#6a8fb8" stroke-width="1.1" stroke-opacity=".9"/><line x1="188" y1="50" x2="206" y2="81" stroke="#8a97a4" stroke-width="1.1" stroke-opacity=".9"/><line x1="154" y1="65" x2="140" y2="82" stroke="#9aa0a8" stroke-width="1.1" stroke-opacity=".9"/><line x1="226" y1="28" x2="263" y2="58" stroke="#5f7fa6" stroke-width="1.1" stroke-opacity=".9"/><line x1="226" y1="28" x2="206" y2="80" stroke="#aab3bb" stroke-width="1.1" stroke-opacity=".9"/><line x1="226" y1="28" x2="193" y2="41" stroke="#6a8fb8" stroke-width="1.1" stroke-opacity=".9"/><line x1="263" y1="58" x2="293" y2="40" stroke="#8a97a4" stroke-width="1.1" stroke-opacity=".9"/><line x1="263" y1="58" x2="280" y2="83" stroke="#9aa0a8" stroke-width="1.1" stroke-opacity=".9"/><line x1="263" y1="58" x2="206" y2="80" stroke="#5f7fa6" stroke-width="1.1" stroke-opacity=".9"/><line x1="293" y1="40" x2="351" y2="39" stroke="#aab3bb" stroke-width="1.1" stroke-opacity=".9"/><line x1="293" y1="40" x2="304" y2="22" stroke="#6a8fb8" stroke-width="1.1" stroke-opacity=".9"/><line x1="293" y1="40" x2="304" y2="83" stroke="#8a97a4" stroke-width="1.1" stroke-opacity=".9"/><line x1="351" y1="39" x2="342" y2="22" stroke="#9aa0a8" stroke-width="1.1" stroke-opacity=".9"/><line x1="351" y1="39" x2="403" y2="25" stroke="#5f7fa6" stroke-width="1.1" stroke-opacity=".9"/><line x1="351" y1="39" x2="378" y2="48" stroke="#aab3bb" stroke-width="1.1" stroke-opacity=".9"/><line x1="351" y1="39" x2="349" y2="83" stroke="#6a8fb8" stroke-width="1.1" stroke-opacity=".9"/><line x1="378" y1="48" x2="403" y2="25" stroke="#8a97a4" stroke-width="1.1" stroke-opacity=".9"/><line x1="378" y1="48" x2="382" y2="83" stroke="#9aa0a8" stroke-width="1.1" stroke-opacity=".9"/><line x1="378" y1="48" x2="417" y2="76" stroke="#5f7fa6" stroke-width="1.1" stroke-opacity=".9"/><line x1="378" y1="48" x2="328" y2="81" stroke="#aab3bb" stroke-width="1.1" stroke-opacity=".9"/><line x1="403" y1="25" x2="417" y2="76" stroke="#6a8fb8" stroke-width="1.1" stroke-opacity=".9"/><line x1="403" y1="25" x2="443" y2="27" stroke="#8a97a4" stroke-width="1.1" stroke-opacity=".9"/><line x1="417" y1="76" x2="467" y2="80" stroke="#9aa0a8" stroke-width="1.1" stroke-opacity=".9"/><line x1="417" y1="76" x2="450" y2="39" stroke="#5f7fa6" stroke-width="1.1" stroke-opacity=".9"/><line x1="467" y1="80" x2="509" y2="67" stroke="#aab3bb" stroke-width="1.1" stroke-opacity=".9"/><line x1="467" y1="80" x2="493" y2="46" stroke="#6a8fb8" stroke-width="1.1" stroke-opacity=".9"/><line x1="493" y1="46" x2="474" y2="22" stroke="#8a97a4" stroke-width="1.1" stroke-opacity=".9"/><line x1="493" y1="46" x2="509" y2="67" stroke="#9aa0a8" stroke-width="1.1" stroke-opacity=".9"/><line x1="509" y1="67" x2="521" y2="60" stroke="#5f7fa6" stroke-width="1.1" stroke-opacity=".9"/><line x1="493" y1="46" x2="521" y2="51" stroke="#aab3bb" stroke-width="1.1" stroke-opacity=".9"/><line x1="417" y1="76" x2="433" y2="83" stroke="#6a8fb8" stroke-width="1.1" stroke-opacity=".9"/><line x1="188" y1="50" x2="173" y2="22" stroke="#8a97a4" stroke-width="1.1" stroke-opacity=".9"/><line x1="226" y1="28" x2="238" y2="22" stroke="#9aa0a8" stroke-width="1.1" stroke-opacity=".9"/><line x1="474" y1="22" x2="521" y2="33" stroke="#5f7fa6" stroke-width="1.1" stroke-opacity=".9"/><line x1="78" y1="23" x2="138" y2="50" stroke="#aab3bb" stroke-width="1.1" stroke-opacity=".9"/><line x1="103" y1="76" x2="113" y2="48" stroke="#6a8fb8" stroke-width="1.1" stroke-opacity=".9"/><line x1="113" y1="48" x2="138" y2="50" stroke="#8a97a4" stroke-width="1.1" stroke-opacity=".9"/><line x1="53" y1="47" x2="83" y2="78" stroke="#9aa0a8" stroke-width="1.1" stroke-opacity=".9"/><line x1="206" y1="81" x2="247" y2="83" stroke="#5f7fa6" stroke-width="1.1" stroke-opacity=".9"/><line x1="247" y1="83" x2="263" y2="58" stroke="#aab3bb" stroke-width="1.1" stroke-opacity=".9"/><line x1="280" y1="83" x2="293" y2="40" stroke="#6a8fb8" stroke-width="1.1" stroke-opacity=".9"/><line x1="342" y1="22" x2="378" y2="48" stroke="#8a97a4" stroke-width="1.1" stroke-opacity=".9"/><line x1="304" y1="22" x2="342" y2="22" stroke="#9aa0a8" stroke-width="1.1" stroke-opacity=".9"/><line x1="450" y1="39" x2="493" y2="46" stroke="#5f7fa6" stroke-width="1.1" stroke-opacity=".9"/><line x1="433" y1="83" x2="467" y2="80" stroke="#aab3bb" stroke-width="1.1" stroke-opacity=".9"/><line x1="509" y1="67" x2="521" y2="81" stroke="#6a8fb8" stroke-width="1.1" stroke-opacity=".9"/><line x1="349" y1="83" x2="378" y2="48" stroke="#8a97a4" stroke-width="1.1" stroke-opacity=".9"/><line x1="173" y1="22" x2="226" y2="28" stroke="#9aa0a8" stroke-width="1.1" stroke-opacity=".9"/><line x1="328" y1="81" x2="304" y2="83" stroke="#5f7fa6" stroke-width="1.1" stroke-opacity=".9"/><line x1="403" y1="25" x2="413" y2="22" stroke="#aab3bb" stroke-width="1.1" stroke-opacity=".9"/></g></svg>
<div class="a" style="left:5px;top:27px;width:23px;height:23px;border-radius:50%;background:#f5c21b"></div>
<svg class="a" style="left:13px;top:34px" width="10" height="10"><path d="M1 0L9 4.5L1 9Z" fill="#2f4661"/></svg>
<div class="a" style="left:32px;top:27px;width:23px;height:23px;border-radius:50%;background:#fff"></div>
<div class="a" style="left:40px;top:35px;width:7px;height:7px;background:#2f4661"></div>
<div class="a" style="left:66px;top:28px;width:21px;height:21px;background:#fff"></div>
<div class="a" style="left:93px;top:28px;width:21px;height:21px;background:#fff"></div>
<div class="a" style="left:120px;top:28px;width:21px;height:21px;background:#fff"></div>
<div class="a" style="left:147px;top:28px;width:21px;height:21px;background:#fff"></div>
<svg class="a" style="left:66px;top:28px" width="21" height="21"><path d="M6 4H12L15.5 7.5V17H6Z" fill="#fff" stroke="#2f4661" stroke-width="1.4"/><g fill="#2f4661"><rect x="7.2" y="8" width="1" height="1"/><rect x="7.2" y="10" width="1" height="1"/><rect x="7.2" y="12" width="1" height="1"/><rect x="7.2" y="14" width="1" height="1"/><rect x="9.1" y="8" width="1" height="1"/><rect x="9.1" y="10" width="1" height="1"/><rect x="9.1" y="12" width="1" height="1"/><rect x="9.1" y="14" width="1" height="1"/><rect x="11.0" y="8" width="1" height="1"/><rect x="11.0" y="10" width="1" height="1"/><rect x="11.0" y="12" width="1" height="1"/><rect x="11.0" y="14" width="1" height="1"/><rect x="12.9" y="8" width="1" height="1"/><rect x="12.9" y="10" width="1" height="1"/><rect x="12.9" y="12" width="1" height="1"/><rect x="12.9" y="14" width="1" height="1"/></g></svg>
<svg class="a" style="left:93px;top:28px" width="21" height="21"><path d="M10.5 4L15.5 9.5H12.5V14H8.5V9.5H5.5Z" fill="#2f4661"/><g fill="#2f4661"><rect x="5" y="17" width="1" height="1"/><rect x="7" y="17" width="1" height="1"/><rect x="9" y="17" width="1" height="1"/><rect x="11" y="17" width="1" height="1"/><rect x="13" y="17" width="1" height="1"/><rect x="15" y="17" width="1" height="1"/></g></svg>
<svg class="a" style="left:120px;top:28px" width="21" height="21"><path d="M10.5 14L15.5 8.5H12.5V4H8.5V8.5H5.5Z" fill="#2f4661"/><g fill="#2f4661"><rect x="5" y="17" width="1" height="1"/><rect x="7" y="17" width="1" height="1"/><rect x="9" y="17" width="1" height="1"/><rect x="11" y="17" width="1" height="1"/><rect x="13" y="17" width="1" height="1"/><rect x="15" y="17" width="1" height="1"/></g></svg>
<svg class="a" style="left:147px;top:28px" width="21" height="21"><path d="M3 9H8V5.5L13 10.5L8 15.5V12H3Z" fill="#2f4661"/><g fill="#2f4661"><rect x="16" y="4" width="1" height="1"/><rect x="16" y="6" width="1" height="1"/><rect x="16" y="8" width="1" height="1"/><rect x="16" y="10" width="1" height="1"/><rect x="16" y="12" width="1" height="1"/><rect x="16" y="14" width="1" height="1"/><rect x="16" y="16" width="1" height="1"/><rect x="18" y="4" width="1" height="1"/><rect x="18" y="6" width="1" height="1"/><rect x="18" y="8" width="1" height="1"/><rect x="18" y="10" width="1" height="1"/><rect x="18" y="12" width="1" height="1"/><rect x="18" y="14" width="1" height="1"/><rect x="18" y="16" width="1" height="1"/></g></svg>
<div class="a" style="left:177px;top:30px;font:13.5px 'Liberation Sans',sans-serif;color:#fff;letter-spacing:.4px">Run</div>
<div class="a" style="left:448px;top:28px;width:58px;height:20px;border:1.5px solid #fff"></div>
<div class="a" style="left:456px;top:30px;font:12.5px 'Liberation Sans',sans-serif;color:#fff">Java</div>
<svg class="a" style="left:488px;top:35px" width="10" height="6"><path d="M0 0H9L4.5 5.5Z" fill="#fff"/></svg>
<div class="a" style="left:6px;top:58px;width:97px;height:25px;background:#a6afba;border-top:1px solid #f5c21b"></div>
<div class="a" style="left:16px;top:63px;font:12.5px 'Liberation Sans',sans-serif;color:#1f2a36;letter-spacing:.1px">Myo_Max_05</div>
<div class="a" style="left:110px;top:63px;width:13px;height:13px;border-radius:50%;background:#fff"></div>
<svg class="a" style="left:112px;top:67px" width="9" height="6"><path d="M0.5 0.5H8.5L4.5 5Z" fill="#2f4661"/></svg>
<div class="a" style="left:0;top:83px;width:521px;height:3px;background:#a9b4bf"></div>
<div class="a" style="left:0;top:102px;width:506px;height:16px;background:#e6e6e6"></div>
<div class="a" style="left:506px;top:86px;width:15px;height:606px;background:#f6f6f6;border-left:1px solid #e4e4e4"></div>
<div class="a" style="left:510px;top:330px;width:8px;height:345px;border-radius:4px;background:#c2c2c2"></div>
<div class="code" style="left:6.5px;top:87px">}

<span class="k1">void</span> myoOn(Myo.Event event, Myo myo, <span class="dt">long</span> timestamp) {
  <span class="k3">switch</span>(event) {
    <span class="k1">case</span> EMG:
      OscMessage myOscMessage1 = <span class="k1">new</span> OscMessage(<span class="st">"EMG"</span>);
      <span class="dt">int</span>[] data1 = myo.getEmg();
      <span class="k3">for</span>(<span class="dt">int</span> i = 0; i&lt;data1.<span class="fn">length</span>; i++){
        myOscMessage1.<span class="fn">add</span>(data1[i]);
      }
      oscP5.send(myOscMessage1, myBroadcastLocation);
      <span class="k1">break</span>;
    <span class="k1">case</span> GYROSCOPE:
      OscMessage myOscMessage2 = <span class="k1">new</span> OscMessage(<span class="st">"Gyro"</span>);
      <span class="dt">PVector</span> data2 = myo.getGyroscope();
      myOscMessage2.<span class="fn">add</span>(data2.x/8.0);
      myOscMessage2.<span class="fn">add</span>(data2.y/8.0);
      myOscMessage2.<span class="fn">add</span>(data2.z/8.0);
      oscP5.send(myOscMessage2, myBroadcastLocation);
      <span class="k1">break</span>;
    <span class="k1">case</span> ACCELEROMETER:
      OscMessage myOscMessage3 = <span class="k1">new</span> OscMessage(<span class="st">"Accel"</span>);
      <span class="dt">PVector</span> data3 = myo.getAccelerometer();
      myOscMessage3.<span class="fn">add</span>(data3.x*40);
      myOscMessage3.<span class="fn">add</span>(data3.y*40);
      myOscMessage3.<span class="fn">add</span>(data3.z*40);
      oscP5.send(myOscMessage3, myBroadcastLocation);
      <span class="k1">break</span>;
    <span class="k1">case</span> ORIENTATION:
      OscMessage myOscMessage4 = <span class="k1">new</span> OscMessage(<span class="st">"Orient"</span>);
      <span class="dt">PVector</span> data4 = myo.getOrientation();
      myOscMessage4.<span class="fn">add</span>(data4.x*14);
      myOscMessage4.<span class="fn">add</span>(data4.y*14);
      myOscMessage4.<span class="fn">add</span>(data4.z*14);
      oscP5.send(myOscMessage4, myBroadcastLocation);
      <span class="k1">break</span>;
  }
}</div>
<div class="a" style="left:0;top:692px;width:521px;height:14px;background:#f8f8f8;border-top:1px solid #e2e2e2"></div>
<div class="a" style="left:0;top:706px;width:521px;height:10px;background:#ececec"></div>
<svg class="a" style="left:256px;top:707px" width="6" height="4"><path d="M0.5 3.5L3 1L5.5 3.5" stroke="#999" fill="none"/></svg>
<div class="a" style="left:0;top:716px;width:521px;height:32px;background:linear-gradient(#7b858f,#87919b)"></div>
<div class="a" style="left:0;top:748px;width:521px;height:66px;background:#000"></div>
<div class="a" style="left:506px;top:748px;width:15px;height:66px;background:#fbfbfb"></div>
<div class="a" style="left:510px;top:796px;width:8px;height:16px;border-radius:4px;background:#c4c4c4"></div>
<div class="code" style="left:1px;top:750px;color:#d6d6d6">@ 8000
### [2015/2/26 14:8:56] INFO @ OscP5 is running. you (172.16.65.165)
are listening @ port 8000</div>
<div class="a" style="left:0;top:814px;width:521px;height:20px;background:#29323b"></div>
<div class="a" style="left:7px;top:818px;font:11.5px 'Liberation Mono',monospace;color:#e8e8e8">28</div>
</div>
</body></html>
